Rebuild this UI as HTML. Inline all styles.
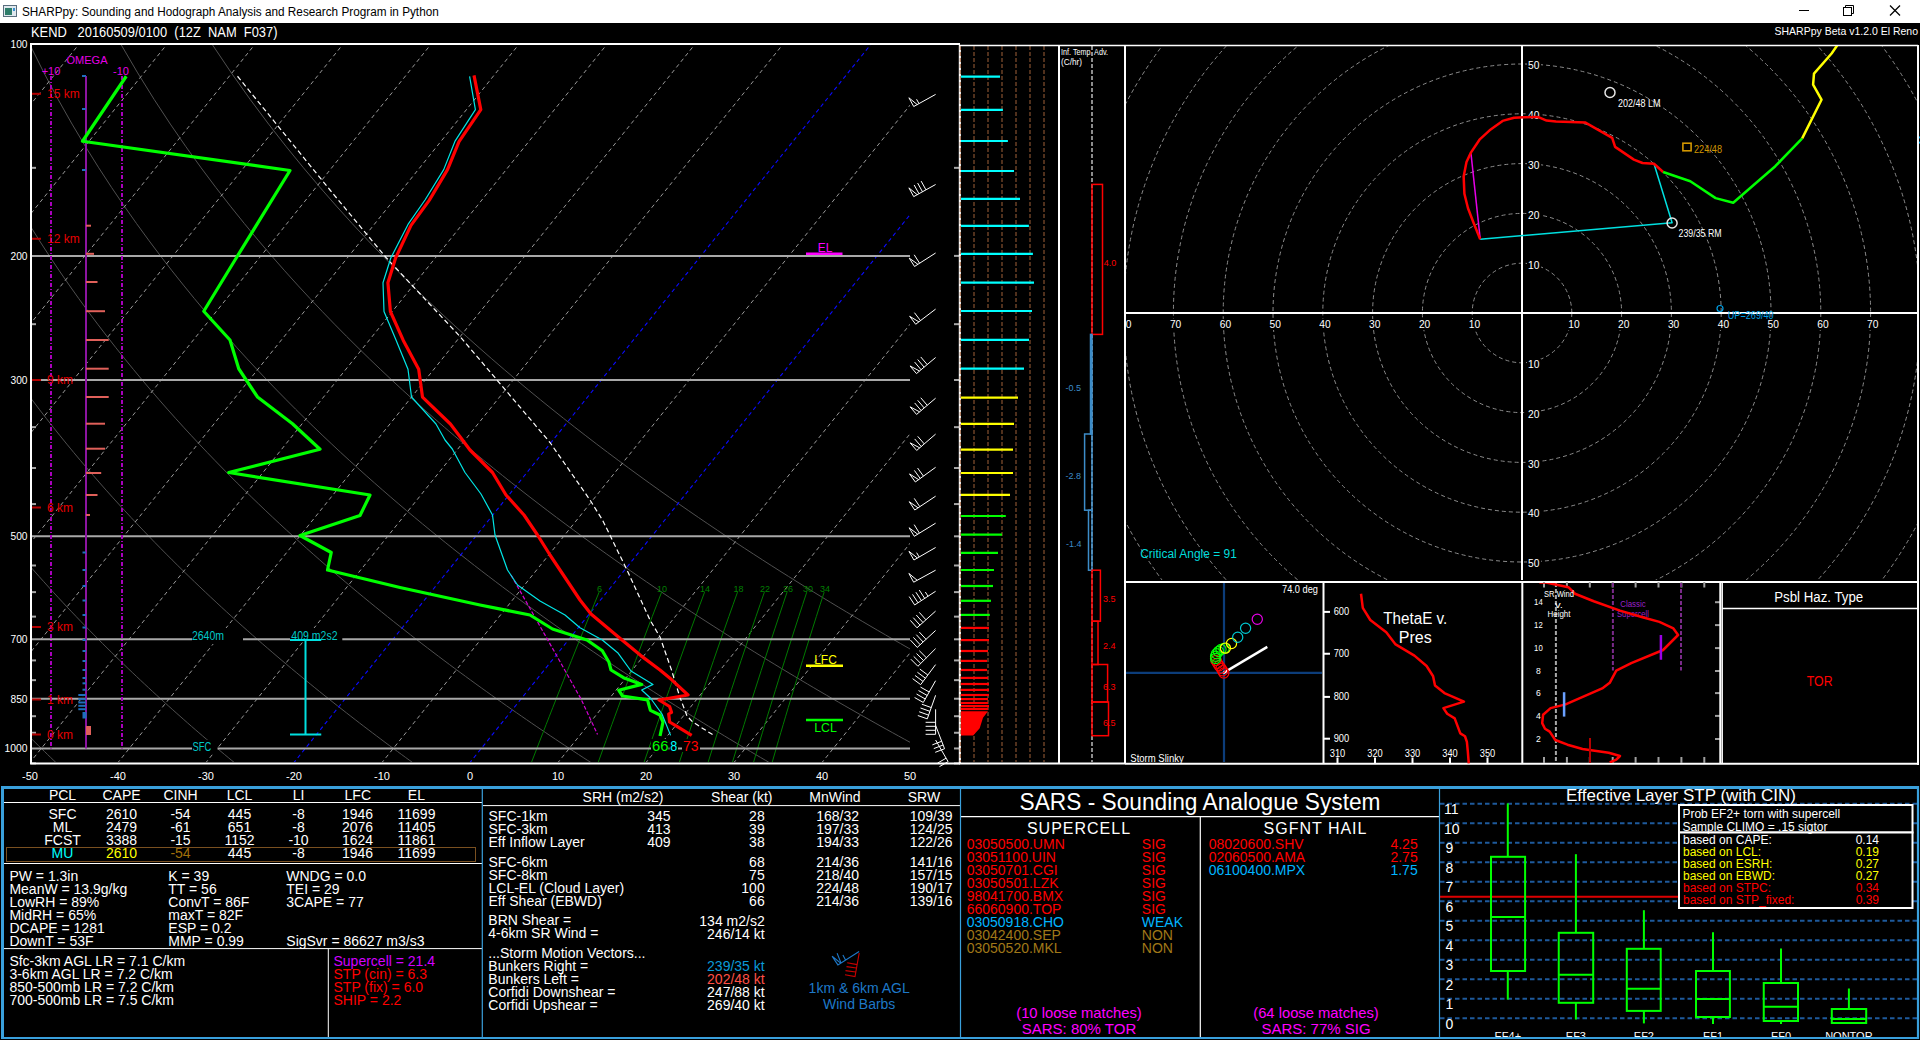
<!DOCTYPE html>
<html><head><meta charset="utf-8"><title>SHARPpy</title>
<style>
html,body{margin:0;padding:0;background:#000;width:1920px;height:1040px;overflow:hidden}
svg{display:block}
text{font-family:"Liberation Sans",sans-serif}
</style></head><body>
<svg width="1920" height="1040" viewBox="0 0 1920 1040">
<rect x="0" y="0" width="1920" height="1040" fill="#000" stroke="none" stroke-width="1"/>
<rect x="0" y="0" width="1920" height="23" fill="#fff" stroke="none" stroke-width="1"/>
<rect x="3.5" y="5.5" width="13" height="11" fill="#dfe8ee" stroke="#5a6e7e" stroke-width="1"/>
<rect x="5" y="8" width="7" height="7" fill="#2e7d6a" stroke="none" stroke-width="1"/>
<rect x="13" y="8" width="2" height="3" fill="#3a8fd0" stroke="none" stroke-width="1"/>
<text x="22" y="15.64" font-size="12" fill="#000" textLength="416.75" lengthAdjust="spacingAndGlyphs" xml:space="preserve">SHARPpy: Sounding and Hodograph Analysis and Research Program in Python</text>
<line x1="1799" y1="10.5" x2="1809" y2="10.5" stroke="#000" stroke-width="1"/>
<rect x="1843.5" y="7.5" width="8" height="8" fill="none" stroke="#000" stroke-width="1"/>
<path d="M1845.5,7.5 V5.5 H1853.5 V13.5 H1851.5" fill="none" stroke="#000" stroke-width="1"/>
<line x1="1890" y1="5.5" x2="1900" y2="15.5" stroke="#000" stroke-width="1.2"/>
<line x1="1900" y1="5.5" x2="1890" y2="15.5" stroke="#000" stroke-width="1.2"/>
<text x="31" y="37.33" font-size="14" fill="#fff" textLength="246.5" lengthAdjust="spacingAndGlyphs" xml:space="preserve">KEND   20160509/0100  (12Z  NAM  F037)</text>
<text x="1918" y="35" font-size="11" fill="#fff" text-anchor="end" textLength="143.5" lengthAdjust="spacingAndGlyphs" xml:space="preserve">SHARPpy Beta v1.2.0 El Reno</text>
<defs><clipPath id="skc"><rect x="31" y="45" width="879" height="717"/></clipPath><clipPath id="hodc"><rect x="1126" y="46" width="791" height="534"/></clipPath></defs>
<g clip-path="url(#skc)">
<polyline points="56.85,763.39 53.78,760.46 50.7,757.5 47.6,754.52 44.49,751.5 41.36,748.46 38.22,745.38 35.06,742.27 31.89,739.13 28.7,735.96 25.49,732.76 22.27,729.52 19.03,726.25 15.77,722.94 12.5,719.59 9.21,716.21 5.91,712.79 2.58,709.33 -0.76,705.84 -4.12,702.3 -7.5,698.72 -10.9,695.1 -14.32,691.43 -17.75,687.72 -21.21,683.96 -24.68,680.16 -28.18,676.31 -31.7,672.41 -35.23,668.47 -38.79,664.46 -42.37,660.41 -45.97,656.3 -49.59,652.14 -53.24,647.92 -56.9,643.64 -60.59,639.3 -64.31,634.89 -68.04,630.42 -71.8,625.89 -75.59,621.29 -79.4,616.62 -83.24,611.87 -87.1,607.05 -90.99,602.15 -94.9,597.18 -98.84,592.12 -102.81,586.97 -106.81,581.74 -110.83,576.42 -114.89,571 -118.97,565.49 -123.08,559.87 -127.23,554.15 -131.4,548.32 -135.61,542.38 -139.84,536.32 -144.11,530.14 -148.42,523.82 -152.75,517.38 -157.12,510.8 -161.53,504.07 -165.97,497.2 -170.45,490.16 -174.96,482.96 -179.51,475.58 -184.1,468.03 -188.72,460.28 -193.39,452.33 -198.09,444.17 -202.83,435.78 -207.62,427.16 -212.44,418.29 -217.3,409.15 -222.21,399.73 -227.15,390.02 -232.14,379.98 -237.16,369.6 -242.23,358.87 -247.34,347.73 -252.48,336.18 -257.66,324.18 -262.88,311.69 -268.13,298.66 -273.41,285.06 -278.72,270.82 -284.04,255.89 -289.38,240.19 -294.73,223.64 -300.07,206.15 -305.38,187.59 -310.66,167.84 -315.87,146.73 -320.98,124.05 -325.96,99.55 -330.72,72.92 -335.21,43.75" fill="none" stroke="#505050" stroke-width="1" stroke-linejoin="round"/>
<polyline points="235.32,763.39 231.76,760.46 228.19,757.5 224.6,754.52 220.99,751.5 217.36,748.46 213.71,745.38 210.05,742.27 206.36,739.13 202.66,735.96 198.93,732.76 195.18,729.52 191.42,726.25 187.63,722.94 183.82,719.59 179.99,716.21 176.14,712.79 172.27,709.33 168.37,705.84 164.45,702.3 160.51,698.72 156.55,695.1 152.56,691.43 148.55,687.72 144.51,683.96 140.45,680.16 136.36,676.31 132.24,672.41 128.1,668.47 123.94,664.46 119.74,660.41 115.52,656.3 111.28,652.14 107,647.92 102.69,643.64 98.36,639.3 93.99,634.89 89.59,630.42 85.17,625.89 80.71,621.29 76.22,616.62 71.69,611.87 67.14,607.05 62.55,602.15 57.92,597.18 53.26,592.12 48.56,586.97 43.83,581.74 39.06,576.42 34.25,571 29.4,565.49 24.51,559.87 19.58,554.15 14.61,548.32 9.59,542.38 4.54,536.32 -0.56,530.14 -5.71,523.82 -10.9,517.38 -16.14,510.8 -21.43,504.07 -26.77,497.2 -32.16,490.16 -37.6,482.96 -43.09,475.58 -48.63,468.03 -54.24,460.28 -59.9,452.33 -65.61,444.17 -71.39,435.78 -77.22,427.16 -83.12,418.29 -89.08,409.15 -95.11,399.73 -101.2,390.02 -107.36,379.98 -113.59,369.6 -119.89,358.87 -126.26,347.73 -132.71,336.18 -139.22,324.18 -145.81,311.69 -152.48,298.66 -159.22,285.06 -166.03,270.82 -172.92,255.89 -179.87,240.19 -186.9,223.64 -193.98,206.15 -201.12,187.59 -208.3,167.84 -215.51,146.73 -222.73,124.05 -229.92,99.55 -237.05,72.92 -244.04,43.75" fill="none" stroke="#505050" stroke-width="1" stroke-linejoin="round"/>
<polyline points="413.79,763.39 409.74,760.46 405.68,757.5 401.6,754.52 397.49,751.5 393.36,748.46 389.21,745.38 385.03,742.27 380.84,739.13 376.61,735.96 372.37,732.76 368.1,729.52 363.81,726.25 359.49,722.94 355.14,719.59 350.77,716.21 346.38,712.79 341.96,709.33 337.51,705.84 333.03,702.3 328.53,698.72 324,695.1 319.43,691.43 314.84,687.72 310.22,683.96 305.58,680.16 300.9,676.31 296.18,672.41 291.44,668.47 286.67,664.46 281.86,660.41 277.02,656.3 272.14,652.14 267.23,647.92 262.29,643.64 257.3,639.3 252.29,634.89 247.23,630.42 242.14,625.89 237.01,621.29 231.84,616.62 226.62,611.87 221.37,607.05 216.08,602.15 210.74,597.18 205.36,592.12 199.93,586.97 194.46,581.74 188.94,576.42 183.38,571 177.76,565.49 172.1,559.87 166.38,554.15 160.61,548.32 154.79,542.38 148.92,536.32 142.99,530.14 137,523.82 130.95,517.38 124.84,510.8 118.67,504.07 112.43,497.2 106.14,490.16 99.77,482.96 93.33,475.58 86.83,468.03 80.25,460.28 73.6,452.33 66.87,444.17 60.06,435.78 53.17,427.16 46.2,418.29 39.13,409.15 31.99,399.73 24.75,390.02 17.41,379.98 9.98,369.6 2.45,358.87 -5.19,347.73 -12.93,336.18 -20.78,324.18 -28.75,311.69 -36.83,298.66 -45.02,285.06 -53.35,270.82 -61.79,255.89 -70.36,240.19 -79.07,223.64 -87.9,206.15 -96.86,187.59 -105.94,167.84 -115.15,146.73 -124.47,124.05 -133.88,99.55 -143.37,72.92 -152.88,43.75" fill="none" stroke="#505050" stroke-width="1" stroke-linejoin="round"/>
<polyline points="592.26,763.39 587.73,760.46 583.17,757.5 578.59,754.52 573.99,751.5 569.36,748.46 564.7,745.38 560.02,742.27 555.31,739.13 550.57,735.96 545.81,732.76 541.02,729.52 536.19,726.25 531.34,722.94 526.46,719.59 521.56,716.21 516.62,712.79 511.64,709.33 506.64,705.84 501.61,702.3 496.54,698.72 491.44,695.1 486.31,691.43 481.14,687.72 475.94,683.96 470.71,680.16 465.43,676.31 460.12,672.41 454.78,668.47 449.39,664.46 443.97,660.41 438.51,656.3 433.01,652.14 427.46,647.92 421.88,643.64 416.25,639.3 410.58,634.89 404.87,630.42 399.11,625.89 393.31,621.29 387.46,616.62 381.56,611.87 375.61,607.05 369.61,602.15 363.56,597.18 357.46,592.12 351.3,586.97 345.1,581.74 338.83,576.42 332.51,571 326.13,565.49 319.69,559.87 313.19,554.15 306.62,548.32 299.99,542.38 293.3,536.32 286.54,530.14 279.7,523.82 272.8,517.38 265.82,510.8 258.77,504.07 251.64,497.2 244.43,490.16 237.13,482.96 229.76,475.58 222.29,468.03 214.74,460.28 207.09,452.33 199.35,444.17 191.51,435.78 183.56,427.16 175.51,418.29 167.35,409.15 159.08,399.73 150.69,390.02 142.19,379.98 133.55,369.6 124.79,358.87 115.89,347.73 106.85,336.18 97.66,324.18 88.32,311.69 78.83,298.66 69.17,285.06 59.34,270.82 49.33,255.89 39.15,240.19 28.77,223.64 18.19,206.15 7.41,187.59 -3.58,167.84 -14.79,146.73 -26.21,124.05 -37.85,99.55 -49.69,72.92 -61.72,43.75" fill="none" stroke="#505050" stroke-width="1" stroke-linejoin="round"/>
<polyline points="770.73,763.39 765.71,760.46 760.67,757.5 755.59,754.52 750.49,751.5 745.36,748.46 740.2,745.38 735.01,742.27 729.79,739.13 724.53,735.96 719.25,732.76 713.93,729.52 708.58,726.25 703.2,722.94 697.79,719.59 692.34,716.21 686.85,712.79 681.33,709.33 675.78,705.84 670.19,702.3 664.56,698.72 658.89,695.1 653.19,691.43 647.44,687.72 641.66,683.96 635.84,680.16 629.97,676.31 624.06,672.41 618.11,668.47 612.12,664.46 606.08,660.41 600,656.3 593.87,652.14 587.7,647.92 581.47,643.64 575.2,639.3 568.88,634.89 562.51,630.42 556.08,625.89 549.61,621.29 543.07,616.62 536.49,611.87 529.84,607.05 523.14,602.15 516.38,597.18 509.56,592.12 502.68,586.97 495.73,581.74 488.72,576.42 481.64,571 474.49,565.49 467.28,559.87 459.99,554.15 452.63,548.32 445.19,542.38 437.68,536.32 430.08,530.14 422.41,523.82 414.65,517.38 406.8,510.8 398.87,504.07 390.84,497.2 382.72,490.16 374.5,482.96 366.18,475.58 357.75,468.03 349.22,460.28 340.58,452.33 331.83,444.17 322.95,435.78 313.95,427.16 304.83,418.29 295.57,409.15 286.18,399.73 276.64,390.02 266.96,379.98 257.12,369.6 247.13,358.87 236.96,347.73 226.62,336.18 216.1,324.18 205.39,311.69 194.48,298.66 183.36,285.06 172.03,270.82 160.46,255.89 148.66,240.19 136.6,223.64 124.27,206.15 111.67,187.59 98.77,167.84 85.57,146.73 72.05,124.05 58.19,99.55 43.99,72.92 29.44,43.75" fill="none" stroke="#505050" stroke-width="1" stroke-linejoin="round"/>
<polyline points="949.2,763.39 943.69,760.46 938.16,757.5 932.59,754.52 926.99,751.5 921.36,748.46 915.69,745.38 909.99,742.27 904.26,739.13 898.49,735.96 892.69,732.76 886.85,729.52 880.97,726.25 875.06,722.94 869.11,719.59 863.12,716.21 857.09,712.79 851.02,709.33 844.91,705.84 838.76,702.3 832.57,698.72 826.34,695.1 820.06,691.43 813.74,687.72 807.38,683.96 800.96,680.16 794.51,676.31 788,672.41 781.45,668.47 774.85,664.46 768.2,660.41 761.49,656.3 754.74,652.14 747.93,647.92 741.07,643.64 734.15,639.3 727.18,634.89 720.15,630.42 713.06,625.89 705.9,621.29 698.69,616.62 691.42,611.87 684.08,607.05 676.67,602.15 669.2,597.18 661.66,592.12 654.05,586.97 646.36,581.74 638.61,576.42 630.77,571 622.86,565.49 614.87,559.87 606.79,554.15 598.64,548.32 590.39,542.38 582.06,536.32 573.63,530.14 565.12,523.82 556.5,517.38 547.78,510.8 538.97,504.07 530.04,497.2 521.01,490.16 511.86,482.96 502.6,475.58 493.22,468.03 483.71,460.28 474.07,452.33 464.31,444.17 454.4,435.78 444.35,427.16 434.15,418.29 423.79,409.15 413.28,399.73 402.59,390.02 391.73,379.98 380.69,369.6 369.46,358.87 358.04,347.73 346.4,336.18 334.54,324.18 322.46,311.69 310.13,298.66 297.56,285.06 284.71,270.82 271.59,255.89 258.16,240.19 244.43,223.64 230.36,206.15 215.93,187.59 201.13,167.84 185.93,146.73 170.3,124.05 154.23,99.55 137.67,72.92 120.6,43.75" fill="none" stroke="#505050" stroke-width="1" stroke-linejoin="round"/>
<polyline points="1127.67,763.39 1121.68,760.46 1115.65,757.5 1109.59,754.52 1103.49,751.5 1097.36,748.46 1091.19,745.38 1084.98,742.27 1078.74,739.13 1072.45,735.96 1066.13,732.76 1059.76,729.52 1053.36,726.25 1046.92,722.94 1040.43,719.59 1033.9,716.21 1027.33,712.79 1020.71,709.33 1014.05,705.84 1007.34,702.3 1000.59,698.72 993.79,695.1 986.94,691.43 980.04,687.72 973.09,683.96 966.09,680.16 959.04,676.31 951.94,672.41 944.79,668.47 937.58,664.46 930.31,660.41 922.99,656.3 915.6,652.14 908.16,647.92 900.66,643.64 893.1,639.3 885.47,634.89 877.78,630.42 870.03,625.89 862.2,621.29 854.31,616.62 846.35,611.87 838.31,607.05 830.21,602.15 822.02,597.18 813.76,592.12 805.42,586.97 797,581.74 788.49,576.42 779.9,571 771.23,565.49 762.46,559.87 753.6,554.15 744.64,548.32 735.59,542.38 726.44,536.32 717.18,530.14 707.82,523.82 698.35,517.38 688.77,510.8 679.07,504.07 669.24,497.2 659.3,490.16 649.23,482.96 639.02,475.58 628.68,468.03 618.2,460.28 607.57,452.33 596.78,444.17 585.84,435.78 574.74,427.16 563.46,418.29 552.01,409.15 540.37,399.73 528.54,390.02 516.51,379.98 504.27,369.6 491.8,358.87 479.11,347.73 466.17,336.18 452.98,324.18 439.53,311.69 425.79,298.66 411.75,285.06 397.4,270.82 382.71,255.89 367.67,240.19 352.26,223.64 336.44,206.15 320.19,187.59 303.49,167.84 286.29,146.73 268.56,124.05 250.26,99.55 231.35,72.92 211.76,43.75" fill="none" stroke="#505050" stroke-width="1" stroke-linejoin="round"/>
<line x1="-938.8" y1="763.5" x2="-360.83" y2="44" stroke="#9a9a9a" stroke-width="1" stroke-dasharray="4,3.2"/>
<line x1="-850.8" y1="763.5" x2="-272.83" y2="44" stroke="#9a9a9a" stroke-width="1" stroke-dasharray="4,3.2"/>
<line x1="-762.8" y1="763.5" x2="-184.83" y2="44" stroke="#9a9a9a" stroke-width="1" stroke-dasharray="4,3.2"/>
<line x1="-674.8" y1="763.5" x2="-96.83" y2="44" stroke="#9a9a9a" stroke-width="1" stroke-dasharray="4,3.2"/>
<line x1="-586.8" y1="763.5" x2="-8.83" y2="44" stroke="#9a9a9a" stroke-width="1" stroke-dasharray="4,3.2"/>
<line x1="-498.8" y1="763.5" x2="79.17" y2="44" stroke="#9a9a9a" stroke-width="1" stroke-dasharray="4,3.2"/>
<line x1="-410.8" y1="763.5" x2="167.17" y2="44" stroke="#9a9a9a" stroke-width="1" stroke-dasharray="4,3.2"/>
<line x1="-322.8" y1="763.5" x2="255.17" y2="44" stroke="#9a9a9a" stroke-width="1" stroke-dasharray="4,3.2"/>
<line x1="-234.8" y1="763.5" x2="343.17" y2="44" stroke="#9a9a9a" stroke-width="1" stroke-dasharray="4,3.2"/>
<line x1="-146.8" y1="763.5" x2="431.17" y2="44" stroke="#9a9a9a" stroke-width="1" stroke-dasharray="4,3.2"/>
<line x1="-58.8" y1="763.5" x2="519.17" y2="44" stroke="#9a9a9a" stroke-width="1" stroke-dasharray="4,3.2"/>
<line x1="29.2" y1="763.5" x2="607.17" y2="44" stroke="#9a9a9a" stroke-width="1" stroke-dasharray="4,3.2"/>
<line x1="117.2" y1="763.5" x2="695.17" y2="44" stroke="#9a9a9a" stroke-width="1" stroke-dasharray="4,3.2"/>
<line x1="205.2" y1="763.5" x2="783.17" y2="44" stroke="#9a9a9a" stroke-width="1" stroke-dasharray="4,3.2"/>
<line x1="293.2" y1="763.5" x2="871.17" y2="44" stroke="#0a0aff" stroke-width="1.1" stroke-dasharray="4,3.2"/>
<line x1="381.2" y1="763.5" x2="959.17" y2="44" stroke="#9a9a9a" stroke-width="1" stroke-dasharray="4,3.2"/>
<line x1="469.2" y1="763.5" x2="1047.17" y2="44" stroke="#0a0aff" stroke-width="1.1" stroke-dasharray="4,3.2"/>
<line x1="557.2" y1="763.5" x2="1135.17" y2="44" stroke="#9a9a9a" stroke-width="1" stroke-dasharray="4,3.2"/>
<line x1="645.2" y1="763.5" x2="1223.17" y2="44" stroke="#9a9a9a" stroke-width="1" stroke-dasharray="4,3.2"/>
<line x1="733.2" y1="763.5" x2="1311.17" y2="44" stroke="#9a9a9a" stroke-width="1" stroke-dasharray="4,3.2"/>
<line x1="821.2" y1="763.5" x2="1399.17" y2="44" stroke="#9a9a9a" stroke-width="1" stroke-dasharray="4,3.2"/>
<line x1="909.2" y1="763.5" x2="1487.17" y2="44" stroke="#9a9a9a" stroke-width="1" stroke-dasharray="4,3.2"/>
</g>
<g clip-path="url(#skc)">
<polyline points="599.12,592.12 594.01,604.61 589.12,616.62 584.44,628.17 579.95,639.3 575.63,650.04 571.47,660.41 567.46,670.45 563.6,680.16 559.87,689.58 556.26,698.72 552.78,707.59 549.4,716.21 546.12,724.6 542.94,732.76 539.86,740.71 536.86,748.46 533.94,756.01 531.11,763.39" fill="none" stroke="#007a00" stroke-width="1" stroke-linejoin="round"/>
<polyline points="661.64,592.12 656.82,604.61 652.21,616.62 647.8,628.17 643.58,639.3 639.52,650.04 635.61,660.41 631.85,670.45 628.22,680.16 624.73,689.58 621.35,698.72 618.08,707.59 614.91,716.21 611.85,724.6 608.88,732.76 605.99,740.71 603.19,748.46 600.47,756.01 597.83,763.39" fill="none" stroke="#007a00" stroke-width="1" stroke-linejoin="round"/>
<polyline points="704.57,592.12 699.96,604.61 695.55,616.62 691.34,628.17 687.3,639.3 683.42,650.04 679.69,660.41 676.1,670.45 672.64,680.16 669.31,689.58 666.09,698.72 662.97,707.59 659.96,716.21 657.05,724.6 654.22,732.76 651.48,740.71 648.82,748.46 646.23,756.01 643.72,763.39" fill="none" stroke="#007a00" stroke-width="1" stroke-linejoin="round"/>
<polyline points="737.53,592.12 733.09,604.61 728.84,616.62 724.77,628.17 720.88,639.3 717.14,650.04 713.55,660.41 710.1,670.45 706.77,680.16 703.56,689.58 700.47,698.72 697.47,707.59 694.58,716.21 691.78,724.6 689.07,732.76 686.44,740.71 683.89,748.46 681.41,756.01 679,763.39" fill="none" stroke="#007a00" stroke-width="1" stroke-linejoin="round"/>
<polyline points="764.39,592.12 760.07,604.61 755.95,616.62 752.01,628.17 748.24,639.3 744.62,650.04 741.14,660.41 737.8,670.45 734.58,680.16 731.48,689.58 728.49,698.72 725.6,707.59 722.8,716.21 720.1,724.6 717.48,732.76 714.94,740.71 712.48,748.46 710.09,756.01 707.77,763.39" fill="none" stroke="#007a00" stroke-width="1" stroke-linejoin="round"/>
<polyline points="787.09,592.12 782.89,604.61 778.88,616.62 775.05,628.17 771.38,639.3 767.86,650.04 764.48,660.41 761.23,670.45 758.11,680.16 755.09,689.58 752.19,698.72 749.38,707.59 746.67,716.21 744.05,724.6 741.51,732.76 739.05,740.71 736.67,748.46 734.35,756.01 732.11,763.39" fill="none" stroke="#007a00" stroke-width="1" stroke-linejoin="round"/>
<polyline points="806.78,592.12 802.67,604.61 798.76,616.62 795.02,628.17 791.44,639.3 788.01,650.04 784.72,660.41 781.55,670.45 778.51,680.16 775.57,689.58 772.75,698.72 770.02,707.59 767.38,716.21 764.83,724.6 762.36,732.76 759.97,740.71 757.65,748.46 755.4,756.01 753.22,763.39" fill="none" stroke="#007a00" stroke-width="1" stroke-linejoin="round"/>
<polyline points="824.16,592.12 820.15,604.61 816.32,616.62 812.66,628.17 809.16,639.3 805.81,650.04 802.59,660.41 799.5,670.45 796.53,680.16 793.67,689.58 790.91,698.72 788.24,707.59 785.67,716.21 783.19,724.6 780.78,732.76 778.45,740.71 776.19,748.46 774,756.01 771.88,763.39" fill="none" stroke="#007a00" stroke-width="1" stroke-linejoin="round"/>
</g>
<text x="599.5" y="591.61" font-size="9" fill="#008000" text-anchor="middle" xml:space="preserve">6</text>
<text x="662" y="591.61" font-size="9" fill="#008000" text-anchor="middle" xml:space="preserve">10</text>
<text x="705" y="591.61" font-size="9" fill="#008000" text-anchor="middle" xml:space="preserve">14</text>
<text x="738.5" y="591.61" font-size="9" fill="#008000" text-anchor="middle" xml:space="preserve">18</text>
<text x="765" y="591.61" font-size="9" fill="#008000" text-anchor="middle" xml:space="preserve">22</text>
<text x="788" y="591.61" font-size="9" fill="#008000" text-anchor="middle" xml:space="preserve">26</text>
<text x="808" y="591.61" font-size="9" fill="#008000" text-anchor="middle" xml:space="preserve">30</text>
<text x="825" y="591.61" font-size="9" fill="#008000" text-anchor="middle" xml:space="preserve">34</text>
<line x1="31" y1="255.89" x2="910" y2="255.89" stroke="#a8a8a8" stroke-width="2"/>
<line x1="31" y1="379.98" x2="910" y2="379.98" stroke="#a8a8a8" stroke-width="2"/>
<line x1="31" y1="536.32" x2="910" y2="536.32" stroke="#a8a8a8" stroke-width="2"/>
<line x1="31" y1="639.3" x2="910" y2="639.3" stroke="#a8a8a8" stroke-width="2"/>
<line x1="31" y1="698.72" x2="910" y2="698.72" stroke="#a8a8a8" stroke-width="2"/>
<line x1="31" y1="748.46" x2="910" y2="748.46" stroke="#a8a8a8" stroke-width="2"/>
<line x1="31" y1="167.84" x2="36" y2="167.84" stroke="#a8a8a8" stroke-width="2"/>
<line x1="954" y1="167.84" x2="959" y2="167.84" stroke="#a8a8a8" stroke-width="2"/>
<line x1="31" y1="324.18" x2="36" y2="324.18" stroke="#a8a8a8" stroke-width="2"/>
<line x1="954" y1="324.18" x2="959" y2="324.18" stroke="#a8a8a8" stroke-width="2"/>
<line x1="31" y1="427.16" x2="36" y2="427.16" stroke="#a8a8a8" stroke-width="2"/>
<line x1="954" y1="427.16" x2="959" y2="427.16" stroke="#a8a8a8" stroke-width="2"/>
<line x1="31" y1="468.03" x2="36" y2="468.03" stroke="#a8a8a8" stroke-width="2"/>
<line x1="954" y1="468.03" x2="959" y2="468.03" stroke="#a8a8a8" stroke-width="2"/>
<line x1="31" y1="504.07" x2="36" y2="504.07" stroke="#a8a8a8" stroke-width="2"/>
<line x1="954" y1="504.07" x2="959" y2="504.07" stroke="#a8a8a8" stroke-width="2"/>
<line x1="31" y1="565.49" x2="36" y2="565.49" stroke="#a8a8a8" stroke-width="2"/>
<line x1="954" y1="565.49" x2="959" y2="565.49" stroke="#a8a8a8" stroke-width="2"/>
<line x1="31" y1="592.12" x2="36" y2="592.12" stroke="#a8a8a8" stroke-width="2"/>
<line x1="954" y1="592.12" x2="959" y2="592.12" stroke="#a8a8a8" stroke-width="2"/>
<line x1="31" y1="616.62" x2="36" y2="616.62" stroke="#a8a8a8" stroke-width="2"/>
<line x1="954" y1="616.62" x2="959" y2="616.62" stroke="#a8a8a8" stroke-width="2"/>
<line x1="31" y1="660.41" x2="36" y2="660.41" stroke="#a8a8a8" stroke-width="2"/>
<line x1="954" y1="660.41" x2="959" y2="660.41" stroke="#a8a8a8" stroke-width="2"/>
<line x1="31" y1="680.16" x2="36" y2="680.16" stroke="#a8a8a8" stroke-width="2"/>
<line x1="954" y1="680.16" x2="959" y2="680.16" stroke="#a8a8a8" stroke-width="2"/>
<line x1="31" y1="716.21" x2="36" y2="716.21" stroke="#a8a8a8" stroke-width="2"/>
<line x1="954" y1="716.21" x2="959" y2="716.21" stroke="#a8a8a8" stroke-width="2"/>
<line x1="31" y1="732.76" x2="36" y2="732.76" stroke="#a8a8a8" stroke-width="2"/>
<line x1="954" y1="732.76" x2="959" y2="732.76" stroke="#a8a8a8" stroke-width="2"/>
<line x1="31" y1="763.39" x2="36" y2="763.39" stroke="#a8a8a8" stroke-width="2"/>
<line x1="954" y1="763.39" x2="959" y2="763.39" stroke="#a8a8a8" stroke-width="2"/>
<line x1="954" y1="255.89" x2="959" y2="255.89" stroke="#a8a8a8" stroke-width="2"/>
<line x1="954" y1="379.98" x2="959" y2="379.98" stroke="#a8a8a8" stroke-width="2"/>
<line x1="954" y1="536.32" x2="959" y2="536.32" stroke="#a8a8a8" stroke-width="2"/>
<line x1="954" y1="639.3" x2="959" y2="639.3" stroke="#a8a8a8" stroke-width="2"/>
<line x1="954" y1="698.72" x2="959" y2="698.72" stroke="#a8a8a8" stroke-width="2"/>
<line x1="954" y1="748.46" x2="959" y2="748.46" stroke="#a8a8a8" stroke-width="2"/>
<text x="27.5" y="47.55" font-size="11" fill="#fff" text-anchor="end" textLength="17" lengthAdjust="spacingAndGlyphs" xml:space="preserve">100</text>
<text x="27.5" y="259.68" font-size="11" fill="#fff" text-anchor="end" textLength="17" lengthAdjust="spacingAndGlyphs" xml:space="preserve">200</text>
<text x="27.5" y="383.78" font-size="11" fill="#fff" text-anchor="end" textLength="17" lengthAdjust="spacingAndGlyphs" xml:space="preserve">300</text>
<text x="27.5" y="540.11" font-size="11" fill="#fff" text-anchor="end" textLength="17" lengthAdjust="spacingAndGlyphs" xml:space="preserve">500</text>
<text x="27.5" y="643.09" font-size="11" fill="#fff" text-anchor="end" textLength="17" lengthAdjust="spacingAndGlyphs" xml:space="preserve">700</text>
<text x="27.5" y="702.51" font-size="11" fill="#fff" text-anchor="end" textLength="17" lengthAdjust="spacingAndGlyphs" xml:space="preserve">850</text>
<text x="27.5" y="752.25" font-size="11" fill="#fff" text-anchor="end" textLength="23" lengthAdjust="spacingAndGlyphs" xml:space="preserve">1000</text>
<text x="30" y="779.79" font-size="11" fill="#fff" text-anchor="middle" xml:space="preserve">-50</text>
<text x="118" y="779.79" font-size="11" fill="#fff" text-anchor="middle" xml:space="preserve">-40</text>
<text x="206" y="779.79" font-size="11" fill="#fff" text-anchor="middle" xml:space="preserve">-30</text>
<text x="294" y="779.79" font-size="11" fill="#fff" text-anchor="middle" xml:space="preserve">-20</text>
<text x="382" y="779.79" font-size="11" fill="#fff" text-anchor="middle" xml:space="preserve">-10</text>
<text x="470" y="779.79" font-size="11" fill="#fff" text-anchor="middle" xml:space="preserve">0</text>
<text x="558" y="779.79" font-size="11" fill="#fff" text-anchor="middle" xml:space="preserve">10</text>
<text x="646" y="779.79" font-size="11" fill="#fff" text-anchor="middle" xml:space="preserve">20</text>
<text x="734" y="779.79" font-size="11" fill="#fff" text-anchor="middle" xml:space="preserve">30</text>
<text x="822" y="779.79" font-size="11" fill="#fff" text-anchor="middle" xml:space="preserve">40</text>
<text x="910" y="779.79" font-size="11" fill="#fff" text-anchor="middle" xml:space="preserve">50</text>
<line x1="51" y1="76" x2="51" y2="748.5" stroke="#a800bc" stroke-width="2" stroke-dasharray="4,2,1,2"/>
<line x1="122" y1="76" x2="122" y2="748.5" stroke="#a800bc" stroke-width="2" stroke-dasharray="4,2,1,2"/>
<line x1="86" y1="76" x2="86" y2="748.5" stroke="#8c14a0" stroke-width="2"/>
<text x="87" y="63.8" font-size="11" fill="#e600e6" text-anchor="middle" xml:space="preserve">OMEGA</text>
<text x="51" y="75.3" font-size="11" fill="#e600e6" text-anchor="middle" xml:space="preserve">+10</text>
<text x="121" y="75.3" font-size="11" fill="#e600e6" text-anchor="middle" xml:space="preserve">-10</text>
<line x1="82" y1="76" x2="86" y2="76" stroke="#1e6ebe" stroke-width="2"/>
<line x1="82" y1="109" x2="86" y2="109" stroke="#1e6ebe" stroke-width="2"/>
<line x1="82" y1="141" x2="86" y2="141" stroke="#1e6ebe" stroke-width="2"/>
<line x1="82" y1="170" x2="86" y2="170" stroke="#1e6ebe" stroke-width="2"/>
<line x1="86" y1="225.7" x2="91" y2="225.7" stroke="#e0605a" stroke-width="2"/>
<line x1="86" y1="253.8" x2="94" y2="253.8" stroke="#e0605a" stroke-width="2"/>
<line x1="86" y1="282" x2="97.5" y2="282" stroke="#e0605a" stroke-width="2"/>
<line x1="86" y1="311.2" x2="105" y2="311.2" stroke="#e0605a" stroke-width="2"/>
<line x1="86" y1="340" x2="108.7" y2="340" stroke="#e0605a" stroke-width="2"/>
<line x1="86" y1="368.7" x2="108.7" y2="368.7" stroke="#e0605a" stroke-width="2"/>
<line x1="86" y1="397" x2="108.7" y2="397" stroke="#e0605a" stroke-width="2"/>
<line x1="86" y1="423.7" x2="105" y2="423.7" stroke="#e0605a" stroke-width="2"/>
<line x1="86" y1="448.7" x2="105" y2="448.7" stroke="#e0605a" stroke-width="2"/>
<line x1="86" y1="473" x2="101.2" y2="473" stroke="#e0605a" stroke-width="2"/>
<line x1="86" y1="495" x2="97.5" y2="495" stroke="#e0605a" stroke-width="2"/>
<line x1="86" y1="515" x2="90" y2="515" stroke="#e0605a" stroke-width="2"/>
<line x1="82.5" y1="552.5" x2="86" y2="552.5" stroke="#1e6ebe" stroke-width="2"/>
<line x1="82.5" y1="570" x2="86" y2="570" stroke="#1e6ebe" stroke-width="2"/>
<line x1="82.5" y1="586" x2="86" y2="586" stroke="#1e6ebe" stroke-width="2"/>
<line x1="82.5" y1="600.5" x2="86" y2="600.5" stroke="#1e6ebe" stroke-width="2"/>
<line x1="82.5" y1="615" x2="86" y2="615" stroke="#1e6ebe" stroke-width="2"/>
<line x1="82.5" y1="627.5" x2="86" y2="627.5" stroke="#1e6ebe" stroke-width="2"/>
<line x1="82.5" y1="640" x2="86" y2="640" stroke="#1e6ebe" stroke-width="2"/>
<line x1="82.5" y1="651" x2="86" y2="651" stroke="#1e6ebe" stroke-width="2"/>
<line x1="82.5" y1="661" x2="86" y2="661" stroke="#1e6ebe" stroke-width="2"/>
<line x1="82.5" y1="670" x2="86" y2="670" stroke="#1e6ebe" stroke-width="2"/>
<line x1="82.5" y1="678" x2="86" y2="678" stroke="#1e6ebe" stroke-width="2"/>
<line x1="82.5" y1="683.3" x2="86" y2="683.3" stroke="#1e6ebe" stroke-width="2"/>
<line x1="82.5" y1="689.7" x2="86" y2="689.7" stroke="#1e6ebe" stroke-width="2"/>
<line x1="78.3" y1="695" x2="86" y2="695" stroke="#1e6ebe" stroke-width="2"/>
<line x1="78.3" y1="699.2" x2="86" y2="699.2" stroke="#1e6ebe" stroke-width="2"/>
<line x1="78.3" y1="702.5" x2="86" y2="702.5" stroke="#1e6ebe" stroke-width="2"/>
<line x1="78.3" y1="705.8" x2="86" y2="705.8" stroke="#1e6ebe" stroke-width="2"/>
<line x1="78.3" y1="709.2" x2="86" y2="709.2" stroke="#1e6ebe" stroke-width="2"/>
<rect x="82.5" y="712" width="4" height="6.5" fill="#1e6ebe" stroke="none" stroke-width="1"/>
<rect x="86" y="726" width="5" height="9" fill="#e0605a" stroke="none" stroke-width="1"/>
<line x1="31" y1="93.8" x2="41" y2="93.8" stroke="#b40000" stroke-width="2"/>
<text x="47" y="97.94" font-size="12" fill="#e60000" xml:space="preserve">15 km</text>
<line x1="31" y1="238.75" x2="41" y2="238.75" stroke="#b40000" stroke-width="2"/>
<text x="47" y="242.89" font-size="12" fill="#e60000" xml:space="preserve">12 km</text>
<line x1="31" y1="380" x2="41" y2="380" stroke="#b40000" stroke-width="2"/>
<text x="47" y="384.14" font-size="12" fill="#e60000" xml:space="preserve">9 km</text>
<line x1="31" y1="507.5" x2="41" y2="507.5" stroke="#b40000" stroke-width="2"/>
<text x="47" y="511.64" font-size="12" fill="#e60000" xml:space="preserve">6 km</text>
<line x1="31" y1="627" x2="41" y2="627" stroke="#b40000" stroke-width="2"/>
<text x="47" y="631.14" font-size="12" fill="#e60000" xml:space="preserve">3 km</text>
<line x1="31" y1="699.5" x2="41" y2="699.5" stroke="#b40000" stroke-width="2"/>
<text x="47" y="703.64" font-size="12" fill="#e60000" xml:space="preserve">1 km</text>
<line x1="31" y1="734.5" x2="41" y2="734.5" stroke="#b40000" stroke-width="2"/>
<text x="47" y="738.64" font-size="12" fill="#e60000" xml:space="preserve">0 km</text>
<g clip-path="url(#skc)">
<polyline points="511,575 555,652.7 581,699 597.5,734.4" fill="none" stroke="#d200d2" stroke-width="1.2" stroke-dasharray="4,2" stroke-linejoin="round"/>
<polyline points="237.5,76.25 330,190 386,257.5 460,336.5 480,360 550,442.5 590,500 602.5,520 627,570 650,620 660,637 671.5,670 680,697.5 687,716 692.7,722 713.8,735.4" fill="none" stroke="#ffffff" stroke-width="1.2" stroke-dasharray="5,3" stroke-linejoin="round"/>
<polyline points="126.25,76.25 82.5,141.25 290,170.5 235,260 203.75,311.25 230,340 238.75,368.75 257.5,397 292.5,423.75 320,449.25 228.75,472.5 370,495 360,515.5 300,535.5 331.25,552.5 327.5,570 400,587.5 480,605 530,615 552.5,629 587,640 602.3,650.8 609,662.3 611,670 623.5,677.7 641.7,684.4 618.7,690.2 622.5,696 647.5,699.8 650.4,710.4 660,715 663,722 660,736" fill="none" stroke="#00ff00" stroke-width="3.2" stroke-linejoin="round"/>
<polyline points="469.6,76.3 475.4,109.6 455.2,140.8 443.7,169.6 425,200 408,224.4 390.8,258 383,282.7 384,311.5 396,340 408,369.2 411.5,397 436,424 445,440 452.3,449 465,472.5 481,494 492.5,515 495,535 507.5,570 517.5,585 540,601 565,615 580,627.7 602.3,640 617.7,652.7 631,671 653,684.4 641.7,690 650.4,698 662,714 670.6,735.4" fill="none" stroke="#00e6e6" stroke-width="1.2" stroke-linejoin="round"/>
<polyline points="474,75.4 480.8,109.6 459,141.7 447.5,169.6 429.2,200.4 411,225.4 395.6,258 387.9,282.7 390.4,311.5 403.3,340.4 418.7,369.2 422.5,397.1 450.4,424 462.5,440 470,450 492.5,472.5 506,495 524,515 537.5,535 550,555 565,577.5 580,600 591,614 619.6,638 640.8,655.6 660,670 671.5,679.6 688,695 659,700 669.6,706.5 671.5,712.3 668.7,714 669.6,722 677.3,726.7 691.7,735.4" fill="none" stroke="#ff0000" stroke-width="3.2" stroke-linejoin="round"/>
</g>
<rect x="651" y="739" width="17.5" height="13" fill="#000" stroke="none" stroke-width="1"/>
<rect x="669.5" y="739" width="8.5" height="13" fill="#000" stroke="none" stroke-width="1"/>
<rect x="682" y="739" width="18" height="13" fill="#000" stroke="none" stroke-width="1"/>
<text x="652" y="750.8" font-size="15" fill="#00ff00" textLength="16.5" lengthAdjust="spacingAndGlyphs" xml:space="preserve">66</text>
<text x="670.3" y="750.8" font-size="15" fill="#00ffff" textLength="7" lengthAdjust="spacingAndGlyphs" xml:space="preserve">8</text>
<text x="683" y="750.8" font-size="15" fill="#ff0000" textLength="15.5" lengthAdjust="spacingAndGlyphs" xml:space="preserve">73</text>
<line x1="806" y1="665.8" x2="843" y2="665.8" stroke="#ffff00" stroke-width="2.5"/>
<text x="825.5" y="663.88" font-size="13" fill="#ffff00" text-anchor="middle" textLength="22.6" lengthAdjust="spacingAndGlyphs" xml:space="preserve">LFC</text>
<line x1="806" y1="720" x2="843" y2="720" stroke="#00ff00" stroke-width="2.5"/>
<text x="825.5" y="732.19" font-size="13" fill="#00ff00" text-anchor="middle" textLength="22.6" lengthAdjust="spacingAndGlyphs" xml:space="preserve">LCL</text>
<line x1="806" y1="253.8" x2="842.5" y2="253.8" stroke="#ff00ff" stroke-width="2.5"/>
<text x="825" y="251.99" font-size="13" fill="#ff00ff" text-anchor="middle" textLength="14.5" lengthAdjust="spacingAndGlyphs" xml:space="preserve">EL</text>
<rect x="192" y="628" width="51" height="16" fill="#000" stroke="none" stroke-width="1"/>
<text x="208" y="640.44" font-size="12" fill="#00c8c8" text-anchor="middle" textLength="32.2" lengthAdjust="spacingAndGlyphs" xml:space="preserve">2640m</text>
<rect x="290" y="628" width="52.3" height="14" fill="#000" stroke="none" stroke-width="1"/>
<text x="314.4" y="640.44" font-size="12" fill="#00c8c8" text-anchor="middle" textLength="46.2" lengthAdjust="spacingAndGlyphs" xml:space="preserve">409 m2s2</text>
<rect x="192" y="740" width="25.5" height="14" fill="#000" stroke="none" stroke-width="1"/>
<text x="201.9" y="751.14" font-size="12" fill="#00c8c8" text-anchor="middle" textLength="18.8" lengthAdjust="spacingAndGlyphs" xml:space="preserve">SFC</text>
<line x1="305.5" y1="640" x2="305.5" y2="734.5" stroke="#00e0e0" stroke-width="2"/>
<line x1="290" y1="640" x2="321.25" y2="640" stroke="#00e0e0" stroke-width="2"/>
<line x1="290" y1="734.5" x2="321.25" y2="734.5" stroke="#00e0e0" stroke-width="2"/>
<line x1="30" y1="44" x2="960" y2="44" stroke="#fff" stroke-width="2"/>
<line x1="31" y1="43" x2="31" y2="763.5" stroke="#fff" stroke-width="2"/>
<line x1="30" y1="763.5" x2="960" y2="763.5" stroke="#fff" stroke-width="2.2"/>
<line x1="959.4" y1="44" x2="959.4" y2="763" stroke="#fff" stroke-width="1.2"/>
<path d="M935.6,94.4L913.73,106.52M913.73,106.52L908.89,97.77L917.23,104.58M918.98,103.61L916.56,99.24" fill="none" stroke="#fff" stroke-width="1" stroke-linejoin="miter"/>
<path d="M935.6,184.5L913.73,196.62M913.73,196.62L908.89,187.87L917.23,194.68M918.98,193.71L914.13,184.97M922.48,191.77L917.63,183.03M925.98,189.83L921.13,181.09" fill="none" stroke="#fff" stroke-width="1" stroke-linejoin="miter"/>
<path d="M935.6,253L914.54,266.47M914.54,266.47L909.15,258.04L917.91,264.31M919.59,263.24L914.21,254.81" fill="none" stroke="#fff" stroke-width="1" stroke-linejoin="miter"/>
<path d="M935.6,309.1L915.71,324.25M915.71,324.25L909.65,316.29L918.9,321.83M920.49,320.61L914.43,312.66" fill="none" stroke="#fff" stroke-width="1" stroke-linejoin="miter"/>
<path d="M935.6,357.5L916.48,373.6M916.48,373.6L910.04,365.95L919.54,371.03M921.07,369.74L914.63,362.09M924.13,367.16L917.68,359.51M927.19,364.59L920.74,356.94" fill="none" stroke="#fff" stroke-width="1" stroke-linejoin="miter"/>
<path d="M935.6,398.2L916.59,414.44M916.59,414.44L910.1,406.83L919.63,411.84M921.15,410.54L914.66,402.94M924.19,407.94L917.7,400.34M927.24,405.34L920.74,397.74" fill="none" stroke="#fff" stroke-width="1" stroke-linejoin="miter"/>
<path d="M935.6,434.1L916.68,450.44M916.68,450.44L910.14,442.87L919.7,447.82M921.22,446.51L914.68,438.95M924.25,443.9L917.71,436.33" fill="none" stroke="#fff" stroke-width="1" stroke-linejoin="miter"/>
<path d="M935.6,467.3L915.37,481.99M915.37,481.99L909.5,473.9L918.61,479.64M920.23,478.47L914.35,470.38M923.46,476.12L917.59,468.03" fill="none" stroke="#fff" stroke-width="1" stroke-linejoin="miter"/>
<path d="M935.6,496.2L914.78,510.03M914.78,510.03L909.24,501.71L918.11,507.82M919.77,506.71L914.24,498.39" fill="none" stroke="#fff" stroke-width="1" stroke-linejoin="miter"/>
<path d="M935.6,523.2L914.31,536.3M914.31,536.3L909.07,527.78L917.71,534.2M919.42,533.16L914.18,524.64" fill="none" stroke="#fff" stroke-width="1" stroke-linejoin="miter"/>
<path d="M935.6,547.5L913.95,560M913.95,560L908.95,551.34L917.41,558M919.15,557L916.65,552.67" fill="none" stroke="#fff" stroke-width="1" stroke-linejoin="miter"/>
<path d="M935.6,570.2L913.67,582.21M913.67,582.21L908.87,573.43L917.18,580.28" fill="none" stroke="#fff" stroke-width="1" stroke-linejoin="miter"/>
<path d="M935.6,591.3L914.66,604.95M914.66,604.95L909.2,596.58M918.01,602.77L912.55,594.39M921.36,600.58L915.9,592.21M924.71,598.4L919.25,590.02M928.06,596.21L925.33,592.03" fill="none" stroke="#fff" stroke-width="1" stroke-linejoin="miter"/>
<path d="M935.6,611.1L916.99,627.8M916.99,627.8L910.31,620.35M919.97,625.12L913.29,617.68M922.95,622.45L916.27,615.01M925.92,619.78L919.25,612.34" fill="none" stroke="#fff" stroke-width="1" stroke-linejoin="miter"/>
<path d="M935.6,630.5L917.23,647.45M917.23,647.45L910.45,640.1M920.17,644.74L913.39,637.39M923.11,642.03L916.32,634.68M926.05,639.32L919.26,631.97" fill="none" stroke="#fff" stroke-width="1" stroke-linejoin="miter"/>
<path d="M935.6,648.6L917.92,666.28M917.92,666.28L910.85,659.21M920.75,663.45L913.68,656.38M923.58,660.62L916.51,653.55M926.41,657.79L919.34,650.72" fill="none" stroke="#fff" stroke-width="1" stroke-linejoin="miter"/>
<path d="M935.6,664.6L920.66,684.64M920.66,684.64L912.64,678.67M923.05,681.44L915.03,675.46M925.44,678.23L917.42,672.25M927.83,675.02L919.81,669.05" fill="none" stroke="#fff" stroke-width="1" stroke-linejoin="miter"/>
<path d="M935.6,680.7L923.29,702.46M923.29,702.46L914.59,697.53M925.26,698.98L916.56,694.05M927.23,695.5L918.53,690.57M929.2,692.01L920.49,687.09" fill="none" stroke="#fff" stroke-width="1" stroke-linejoin="miter"/>
<path d="M935.6,695.3L927.25,718.87M927.25,718.87L917.83,715.53M928.59,715.1L919.16,711.76M929.93,711.32L920.5,707.99M931.26,707.55L921.83,704.22" fill="none" stroke="#fff" stroke-width="1" stroke-linejoin="miter"/>
<path d="M935.6,709.3L935.6,734.3M935.6,734.3L925.6,734.3M935.6,730.3L925.6,730.3M935.6,726.3L925.6,726.3M935.6,722.3L925.6,722.3" fill="none" stroke="#fff" stroke-width="1" stroke-linejoin="miter"/>
<path d="M935.6,725.4L944.56,748.74M944.56,748.74L935.22,752.32M943.13,745.01L933.79,748.59M941.69,741.27L932.36,744.85" fill="none" stroke="#fff" stroke-width="1" stroke-linejoin="miter"/>
<path d="M935.6,740L948.1,761.65M948.1,761.65L939.44,766.65M946.1,758.19L937.44,763.19" fill="none" stroke="#fff" stroke-width="1" stroke-linejoin="miter"/>
<line x1="974" y1="46" x2="974" y2="762" stroke="#50301c" stroke-width="2" stroke-dasharray="4,2"/>
<line x1="988" y1="46" x2="988" y2="762" stroke="#50301c" stroke-width="2" stroke-dasharray="4,2"/>
<line x1="1002" y1="46" x2="1002" y2="762" stroke="#50301c" stroke-width="2" stroke-dasharray="4,2"/>
<line x1="1016" y1="46" x2="1016" y2="762" stroke="#50301c" stroke-width="2" stroke-dasharray="4,2"/>
<line x1="1030" y1="46" x2="1030" y2="762" stroke="#50301c" stroke-width="2" stroke-dasharray="4,2"/>
<line x1="1044" y1="46" x2="1044" y2="762" stroke="#50301c" stroke-width="2" stroke-dasharray="4,2"/>
<line x1="960.3" y1="45" x2="960.3" y2="763" stroke="#ffffff" stroke-width="1.2"/>
<line x1="960.3" y1="46" x2="960.3" y2="762" stroke="#b07a5a" stroke-width="1.2" stroke-dasharray="4,2"/>
<line x1="961" y1="76.7" x2="1000" y2="76.7" stroke="#00ffff" stroke-width="2.2"/>
<line x1="961" y1="109.8" x2="1002.9" y2="109.8" stroke="#00ffff" stroke-width="2.2"/>
<line x1="961" y1="141" x2="1007.9" y2="141" stroke="#00ffff" stroke-width="2.2"/>
<line x1="961" y1="171" x2="1014" y2="171" stroke="#00ffff" stroke-width="2.2"/>
<line x1="961" y1="198.8" x2="1020" y2="198.8" stroke="#00ffff" stroke-width="2.2"/>
<line x1="961" y1="225.9" x2="1028.9" y2="225.9" stroke="#00ffff" stroke-width="2.2"/>
<line x1="961" y1="253.9" x2="1032.9" y2="253.9" stroke="#00ffff" stroke-width="2.2"/>
<line x1="961" y1="282.7" x2="1034" y2="282.7" stroke="#00ffff" stroke-width="2.2"/>
<line x1="961" y1="311" x2="1032" y2="311" stroke="#00ffff" stroke-width="2.2"/>
<line x1="961" y1="339.8" x2="1029" y2="339.8" stroke="#00ffff" stroke-width="2.2"/>
<line x1="961" y1="368.6" x2="1024" y2="368.6" stroke="#00ffff" stroke-width="2.2"/>
<line x1="961" y1="397.7" x2="1018" y2="397.7" stroke="#ffff00" stroke-width="2.2"/>
<line x1="961" y1="423.8" x2="1014" y2="423.8" stroke="#ffff00" stroke-width="2.2"/>
<line x1="961" y1="449.7" x2="1013" y2="449.7" stroke="#ffff00" stroke-width="2.2"/>
<line x1="961" y1="473" x2="1013" y2="473" stroke="#ffff00" stroke-width="2.2"/>
<line x1="961" y1="494.8" x2="1010" y2="494.8" stroke="#ffff00" stroke-width="2.2"/>
<line x1="961" y1="516" x2="1005.8" y2="516" stroke="#00ff00" stroke-width="2.2"/>
<line x1="961" y1="534.7" x2="1002" y2="534.7" stroke="#00ff00" stroke-width="2.2"/>
<line x1="961" y1="552.8" x2="998" y2="552.8" stroke="#00ff00" stroke-width="2.2"/>
<line x1="961" y1="570" x2="994" y2="570" stroke="#00ff00" stroke-width="2.2"/>
<line x1="961" y1="586" x2="993" y2="586" stroke="#00ff00" stroke-width="2.2"/>
<line x1="961" y1="600.8" x2="991" y2="600.8" stroke="#00ff00" stroke-width="2.2"/>
<line x1="961" y1="614.9" x2="989.8" y2="614.9" stroke="#00ff00" stroke-width="2.2"/>
<line x1="961" y1="627.9" x2="989" y2="627.9" stroke="#ff0000" stroke-width="2.2"/>
<line x1="961" y1="640.1" x2="989" y2="640.1" stroke="#ff0000" stroke-width="2.2"/>
<line x1="961" y1="651" x2="988" y2="651" stroke="#ff0000" stroke-width="2.2"/>
<line x1="961" y1="660.9" x2="987" y2="660.9" stroke="#ff0000" stroke-width="2.2"/>
<line x1="961" y1="670" x2="987" y2="670" stroke="#ff0000" stroke-width="2.2"/>
<line x1="961" y1="677.9" x2="988" y2="677.9" stroke="#ff0000" stroke-width="2.2"/>
<line x1="961" y1="684" x2="989" y2="684" stroke="#ff0000" stroke-width="2.2"/>
<line x1="961" y1="689.9" x2="989" y2="689.9" stroke="#ff0000" stroke-width="2.2"/>
<line x1="961" y1="695" x2="989" y2="695" stroke="#ff0000" stroke-width="2.2"/>
<line x1="961" y1="699.1" x2="988" y2="699.1" stroke="#ff0000" stroke-width="2.2"/>
<line x1="961" y1="703" x2="988" y2="703" stroke="#ff0000" stroke-width="2.2"/>
<line x1="961" y1="706.1" x2="989" y2="706.1" stroke="#ff0000" stroke-width="2.2"/>
<line x1="961" y1="709" x2="988" y2="709" stroke="#ff0000" stroke-width="2.2"/>
<path d="M961,711.3 H988 L983,717.8 L979.7,728.2 L973.2,735.5 H961 Z" fill="#ff0000"/>
<line x1="1059" y1="45" x2="1059" y2="763" stroke="#fff" stroke-width="2"/>
<text x="1061" y="55.1" font-size="9" fill="#fff" textLength="47" lengthAdjust="spacingAndGlyphs" xml:space="preserve">Inf. Temp. Adv.</text>
<text x="1061" y="65.41" font-size="9" fill="#fff" textLength="21" lengthAdjust="spacingAndGlyphs" xml:space="preserve">(C/hr)</text>
<line x1="1092" y1="46" x2="1092" y2="762" stroke="#8c8c8c" stroke-width="2" stroke-dasharray="4,2"/>
<rect x="1092" y="184.4" width="10.5" height="150" fill="none" stroke="#ff0000" stroke-width="1.5"/>
<rect x="1090.5" y="334.4" width="1.5" height="99.6" fill="none" stroke="#3c8cc8" stroke-width="1.5"/>
<rect x="1084.6" y="434" width="7.4" height="76.2" fill="none" stroke="#3c8cc8" stroke-width="1.5"/>
<rect x="1088.5" y="510.2" width="3.5" height="60" fill="none" stroke="#3c8cc8" stroke-width="1.5"/>
<rect x="1092" y="570.2" width="8.4" height="51" fill="none" stroke="#ff0000" stroke-width="1.5"/>
<rect x="1092" y="621.2" width="6" height="43.3" fill="none" stroke="#ff0000" stroke-width="1.5"/>
<rect x="1092" y="664.5" width="15.6" height="37.5" fill="none" stroke="#ff0000" stroke-width="1.5"/>
<rect x="1092" y="702" width="16.5" height="33.7" fill="none" stroke="#ff0000" stroke-width="1.5"/>
<text x="1110" y="266.11" font-size="9" fill="#ff0000" text-anchor="middle" xml:space="preserve">4.0</text>
<text x="1073.3" y="391.11" font-size="9" fill="#3c8cc8" text-anchor="middle" xml:space="preserve">-0.5</text>
<text x="1073.3" y="478.91" font-size="9" fill="#3c8cc8" text-anchor="middle" xml:space="preserve">-2.8</text>
<text x="1073.7" y="547.11" font-size="9" fill="#3c8cc8" text-anchor="middle" xml:space="preserve">-1.4</text>
<text x="1109.2" y="602.11" font-size="9" fill="#ff0000" text-anchor="middle" xml:space="preserve">3.5</text>
<text x="1109.2" y="649.11" font-size="9" fill="#ff0000" text-anchor="middle" xml:space="preserve">2.4</text>
<text x="1109.2" y="690.11" font-size="9" fill="#ff0000" text-anchor="middle" xml:space="preserve">6.3</text>
<text x="1109.2" y="726.11" font-size="9" fill="#ff0000" text-anchor="middle" xml:space="preserve">6.5</text>
<line x1="1125" y1="45" x2="1125" y2="763" stroke="#fff" stroke-width="2"/>
<line x1="959" y1="45.5" x2="1918" y2="45.5" stroke="#fff" stroke-width="1.6"/>
<line x1="959" y1="763.5" x2="1125" y2="763.5" stroke="#fff" stroke-width="2.2"/>
<g clip-path="url(#hodc)">
<circle cx="1522.0" cy="313.0" r="49.8" fill="none" stroke="#8c8c8c" stroke-width="1" stroke-dasharray="4,3"/>
<circle cx="1522.0" cy="313.0" r="99.6" fill="none" stroke="#8c8c8c" stroke-width="1" stroke-dasharray="4,3"/>
<circle cx="1522.0" cy="313.0" r="149.4" fill="none" stroke="#8c8c8c" stroke-width="1" stroke-dasharray="4,3"/>
<circle cx="1522.0" cy="313.0" r="199.2" fill="none" stroke="#8c8c8c" stroke-width="1" stroke-dasharray="4,3"/>
<circle cx="1522.0" cy="313.0" r="249" fill="none" stroke="#8c8c8c" stroke-width="1" stroke-dasharray="4,3"/>
<circle cx="1522.0" cy="313.0" r="298.8" fill="none" stroke="#8c8c8c" stroke-width="1" stroke-dasharray="4,3"/>
<circle cx="1522.0" cy="313.0" r="348.6" fill="none" stroke="#8c8c8c" stroke-width="1" stroke-dasharray="4,3"/>
<circle cx="1522.0" cy="313.0" r="398.4" fill="none" stroke="#8c8c8c" stroke-width="1" stroke-dasharray="4,3"/>
<circle cx="1522.0" cy="313.0" r="448.2" fill="none" stroke="#8c8c8c" stroke-width="1" stroke-dasharray="4,3"/>
<circle cx="1522.0" cy="313.0" r="498" fill="none" stroke="#8c8c8c" stroke-width="1" stroke-dasharray="4,3"/>
<circle cx="1522.0" cy="313.0" r="547.8" fill="none" stroke="#8c8c8c" stroke-width="1" stroke-dasharray="4,3"/>
<circle cx="1522.0" cy="313.0" r="597.6" fill="none" stroke="#8c8c8c" stroke-width="1" stroke-dasharray="4,3"/>
<circle cx="1522.0" cy="313.0" r="647.4" fill="none" stroke="#8c8c8c" stroke-width="1" stroke-dasharray="4,3"/>
<circle cx="1522.0" cy="313.0" r="697.2" fill="none" stroke="#8c8c8c" stroke-width="1" stroke-dasharray="4,3"/>
<circle cx="1522.0" cy="313.0" r="747" fill="none" stroke="#8c8c8c" stroke-width="1" stroke-dasharray="4,3"/>
<circle cx="1522.0" cy="313.0" r="796.8" fill="none" stroke="#8c8c8c" stroke-width="1" stroke-dasharray="4,3"/>
<line x1="1125" y1="313" x2="1918" y2="313" stroke="#fff" stroke-width="2"/>
<line x1="1522" y1="45" x2="1522" y2="582" stroke="#fff" stroke-width="2"/>
<rect x="1567" y="319" width="14" height="11" fill="#000" stroke="none" stroke-width="1"/>
<text x="1574" y="328.02" font-size="10.5" fill="#fff" text-anchor="middle" textLength="11.4" lengthAdjust="spacingAndGlyphs" xml:space="preserve">10</text>
<rect x="1467.4" y="319" width="14" height="11" fill="#000" stroke="none" stroke-width="1"/>
<text x="1474.4" y="328.02" font-size="10.5" fill="#fff" text-anchor="middle" textLength="11.4" lengthAdjust="spacingAndGlyphs" xml:space="preserve">10</text>
<rect x="1616.8" y="319" width="14" height="11" fill="#000" stroke="none" stroke-width="1"/>
<text x="1623.8" y="328.02" font-size="10.5" fill="#fff" text-anchor="middle" textLength="11.4" lengthAdjust="spacingAndGlyphs" xml:space="preserve">20</text>
<rect x="1417.6" y="319" width="14" height="11" fill="#000" stroke="none" stroke-width="1"/>
<text x="1424.6" y="328.02" font-size="10.5" fill="#fff" text-anchor="middle" textLength="11.4" lengthAdjust="spacingAndGlyphs" xml:space="preserve">20</text>
<rect x="1666.6" y="319" width="14" height="11" fill="#000" stroke="none" stroke-width="1"/>
<text x="1673.6" y="328.02" font-size="10.5" fill="#fff" text-anchor="middle" textLength="11.4" lengthAdjust="spacingAndGlyphs" xml:space="preserve">30</text>
<rect x="1367.8" y="319" width="14" height="11" fill="#000" stroke="none" stroke-width="1"/>
<text x="1374.8" y="328.02" font-size="10.5" fill="#fff" text-anchor="middle" textLength="11.4" lengthAdjust="spacingAndGlyphs" xml:space="preserve">30</text>
<rect x="1716.4" y="319" width="14" height="11" fill="#000" stroke="none" stroke-width="1"/>
<text x="1723.4" y="328.02" font-size="10.5" fill="#fff" text-anchor="middle" textLength="11.4" lengthAdjust="spacingAndGlyphs" xml:space="preserve">40</text>
<rect x="1318" y="319" width="14" height="11" fill="#000" stroke="none" stroke-width="1"/>
<text x="1325" y="328.02" font-size="10.5" fill="#fff" text-anchor="middle" textLength="11.4" lengthAdjust="spacingAndGlyphs" xml:space="preserve">40</text>
<rect x="1766.2" y="319" width="14" height="11" fill="#000" stroke="none" stroke-width="1"/>
<text x="1773.2" y="328.02" font-size="10.5" fill="#fff" text-anchor="middle" textLength="11.4" lengthAdjust="spacingAndGlyphs" xml:space="preserve">50</text>
<rect x="1268.2" y="319" width="14" height="11" fill="#000" stroke="none" stroke-width="1"/>
<text x="1275.2" y="328.02" font-size="10.5" fill="#fff" text-anchor="middle" textLength="11.4" lengthAdjust="spacingAndGlyphs" xml:space="preserve">50</text>
<rect x="1816" y="319" width="14" height="11" fill="#000" stroke="none" stroke-width="1"/>
<text x="1823" y="328.02" font-size="10.5" fill="#fff" text-anchor="middle" textLength="11.4" lengthAdjust="spacingAndGlyphs" xml:space="preserve">60</text>
<rect x="1218.4" y="319" width="14" height="11" fill="#000" stroke="none" stroke-width="1"/>
<text x="1225.4" y="328.02" font-size="10.5" fill="#fff" text-anchor="middle" textLength="11.4" lengthAdjust="spacingAndGlyphs" xml:space="preserve">60</text>
<rect x="1865.8" y="319" width="14" height="11" fill="#000" stroke="none" stroke-width="1"/>
<text x="1872.8" y="328.02" font-size="10.5" fill="#fff" text-anchor="middle" textLength="11.4" lengthAdjust="spacingAndGlyphs" xml:space="preserve">70</text>
<rect x="1168.6" y="319" width="14" height="11" fill="#000" stroke="none" stroke-width="1"/>
<text x="1175.6" y="328.02" font-size="10.5" fill="#fff" text-anchor="middle" textLength="11.4" lengthAdjust="spacingAndGlyphs" xml:space="preserve">70</text>
<rect x="1915.6" y="319" width="14" height="11" fill="#000" stroke="none" stroke-width="1"/>
<text x="1922.6" y="328.02" font-size="10.5" fill="#fff" text-anchor="middle" textLength="11.4" lengthAdjust="spacingAndGlyphs" xml:space="preserve">80</text>
<rect x="1118.8" y="319" width="14" height="11" fill="#000" stroke="none" stroke-width="1"/>
<text x="1125.8" y="328.02" font-size="10.5" fill="#fff" text-anchor="middle" textLength="11.4" lengthAdjust="spacingAndGlyphs" xml:space="preserve">80</text>
<rect x="1527" y="259.5" width="14" height="11" fill="#000" stroke="none" stroke-width="1"/>
<text x="1533.8" y="268.62" font-size="10.5" fill="#fff" text-anchor="middle" textLength="11.4" lengthAdjust="spacingAndGlyphs" xml:space="preserve">10</text>
<rect x="1527" y="358.8" width="14" height="11" fill="#000" stroke="none" stroke-width="1"/>
<text x="1533.8" y="367.92" font-size="10.5" fill="#fff" text-anchor="middle" textLength="11.4" lengthAdjust="spacingAndGlyphs" xml:space="preserve">10</text>
<rect x="1527" y="209.7" width="14" height="11" fill="#000" stroke="none" stroke-width="1"/>
<text x="1533.8" y="218.82" font-size="10.5" fill="#fff" text-anchor="middle" textLength="11.4" lengthAdjust="spacingAndGlyphs" xml:space="preserve">20</text>
<rect x="1527" y="408.6" width="14" height="11" fill="#000" stroke="none" stroke-width="1"/>
<text x="1533.8" y="417.72" font-size="10.5" fill="#fff" text-anchor="middle" textLength="11.4" lengthAdjust="spacingAndGlyphs" xml:space="preserve">20</text>
<rect x="1527" y="159.9" width="14" height="11" fill="#000" stroke="none" stroke-width="1"/>
<text x="1533.8" y="169.02" font-size="10.5" fill="#fff" text-anchor="middle" textLength="11.4" lengthAdjust="spacingAndGlyphs" xml:space="preserve">30</text>
<rect x="1527" y="458.4" width="14" height="11" fill="#000" stroke="none" stroke-width="1"/>
<text x="1533.8" y="467.52" font-size="10.5" fill="#fff" text-anchor="middle" textLength="11.4" lengthAdjust="spacingAndGlyphs" xml:space="preserve">30</text>
<rect x="1527" y="110.1" width="14" height="11" fill="#000" stroke="none" stroke-width="1"/>
<text x="1533.8" y="119.22" font-size="10.5" fill="#fff" text-anchor="middle" textLength="11.4" lengthAdjust="spacingAndGlyphs" xml:space="preserve">40</text>
<rect x="1527" y="508.2" width="14" height="11" fill="#000" stroke="none" stroke-width="1"/>
<text x="1533.8" y="517.32" font-size="10.5" fill="#fff" text-anchor="middle" textLength="11.4" lengthAdjust="spacingAndGlyphs" xml:space="preserve">40</text>
<rect x="1527" y="60.3" width="14" height="11" fill="#000" stroke="none" stroke-width="1"/>
<text x="1533.8" y="69.42" font-size="10.5" fill="#fff" text-anchor="middle" textLength="11.4" lengthAdjust="spacingAndGlyphs" xml:space="preserve">50</text>
<rect x="1527" y="558" width="14" height="11" fill="#000" stroke="none" stroke-width="1"/>
<text x="1533.8" y="567.12" font-size="10.5" fill="#fff" text-anchor="middle" textLength="11.4" lengthAdjust="spacingAndGlyphs" xml:space="preserve">50</text>
<line x1="1470.9" y1="152.6" x2="1480.2" y2="239.2" stroke="#e600e6" stroke-width="1.5"/>
<polyline points="1480.2,239.2 1672.1,222.8 1654,163.75" fill="none" stroke="#00e0e0" stroke-width="1.5" stroke-linejoin="round"/>
<polyline points="1480.2,239.2 1473.75,223.3 1468,208.2 1464.4,193.75 1463.65,176.4 1466.5,162 1470.9,152.6 1479.5,139.7 1489.6,130.3 1502.6,120.9 1514.1,117.7 1524.2,117.3 1537.9,116.9 1546.6,120.6 1556,121.6 1585.5,122.6 1612.2,137.8 1615.1,146.9 1633.9,159.6 1642.5,163 1654,163.75 1663.1,172" fill="none" stroke="#ff0000" stroke-width="2.5" stroke-linejoin="round"/>
<polyline points="1663.1,172 1690.3,181.3 1715.6,198.1 1733.2,202.8 1775.3,166.2 1802.2,138.4" fill="none" stroke="#00ff00" stroke-width="2.5" stroke-linejoin="round"/>
<polyline points="1802.2,138.4 1821.5,99.7 1813.1,84.6 1814,73.6 1831.6,53.5 1837.5,45 1843,37" fill="none" stroke="#ffff00" stroke-width="2.5" stroke-linejoin="round"/>
</g>
<circle cx="1610" cy="92.5" r="5" fill="none" stroke="#e6e6e6" stroke-width="1.5"/>
<text x="1618" y="107.05" font-size="10" fill="#fff" textLength="42.5" lengthAdjust="spacingAndGlyphs" xml:space="preserve">202/48 LM</text>
<circle cx="1672.1" cy="223" r="5" fill="none" stroke="#e6e6e6" stroke-width="1.5"/>
<text x="1678.6" y="236.85" font-size="10" fill="#fff" textLength="43" lengthAdjust="spacingAndGlyphs" xml:space="preserve">239/35 RM</text>
<rect x="1682.9" y="143.2" width="8.2" height="7.6" fill="none" stroke="#d29600" stroke-width="1.6"/>
<text x="1694" y="152.75" font-size="10" fill="#d29600" textLength="28" lengthAdjust="spacingAndGlyphs" xml:space="preserve">224/48</text>
<circle cx="1720" cy="308.5" r="3" fill="none" stroke="#00a0e6" stroke-width="1.2"/>
<text x="1727.8" y="319.35" font-size="10" fill="#00a0e6" textLength="45.8" lengthAdjust="spacingAndGlyphs" xml:space="preserve">UP=269/40</text>
<circle cx="1921" cy="140" r="3" fill="none" stroke="#00a0e6" stroke-width="1.5"/>
<text x="1140.2" y="557.94" font-size="12" fill="#00dcdc" textLength="96.6" lengthAdjust="spacingAndGlyphs" xml:space="preserve">Critical Angle = 91</text>
<line x1="1918" y1="45" x2="1918" y2="583" stroke="#fff" stroke-width="2"/>
<line x1="1125" y1="582" x2="1919" y2="582" stroke="#fff" stroke-width="2"/>
<line x1="1224" y1="583" x2="1224" y2="762" stroke="#0c3d7a" stroke-width="2.2"/>
<line x1="1126" y1="672.9" x2="1322" y2="672.9" stroke="#0c3d7a" stroke-width="2.2"/>
<line x1="1223.1" y1="673.1" x2="1267.3" y2="646.9" stroke="#fff" stroke-width="2.4"/>
<circle cx="1216" cy="660.5" r="5.1" fill="none" stroke="#ff0000" stroke-width="1.2"/>
<circle cx="1217.5" cy="663.2" r="5.1" fill="none" stroke="#ff0000" stroke-width="1.2"/>
<circle cx="1219.2" cy="665.8" r="5.1" fill="none" stroke="#ff0000" stroke-width="1.2"/>
<circle cx="1221" cy="668.3" r="5.1" fill="none" stroke="#ff0000" stroke-width="1.2"/>
<circle cx="1222.6" cy="670.8" r="5.1" fill="none" stroke="#ff0000" stroke-width="1.2"/>
<circle cx="1223.8" cy="673" r="5.1" fill="none" stroke="#ff0000" stroke-width="1.2"/>
<circle cx="1224" cy="648.5" r="5.1" fill="none" stroke="#00ff00" stroke-width="1.2"/>
<circle cx="1221" cy="649.5" r="5.1" fill="none" stroke="#00ff00" stroke-width="1.2"/>
<circle cx="1218.5" cy="651.5" r="5.1" fill="none" stroke="#00ff00" stroke-width="1.2"/>
<circle cx="1216.5" cy="653.8" r="5.1" fill="none" stroke="#00ff00" stroke-width="1.2"/>
<circle cx="1215.6" cy="656.2" r="5.1" fill="none" stroke="#00ff00" stroke-width="1.2"/>
<circle cx="1215.6" cy="658.5" r="5.1" fill="none" stroke="#00ff00" stroke-width="1.2"/>
<circle cx="1225.4" cy="648.1" r="5.1" fill="none" stroke="#ffff00" stroke-width="1.2"/>
<circle cx="1231.5" cy="643.5" r="5.1" fill="none" stroke="#ffff00" stroke-width="1.2"/>
<circle cx="1237.7" cy="637.2" r="5.1" fill="none" stroke="#00c8d2" stroke-width="1.2"/>
<circle cx="1245.6" cy="628.3" r="5.1" fill="none" stroke="#00c8d2" stroke-width="1.2"/>
<circle cx="1257.3" cy="619.2" r="5.1" fill="none" stroke="#e600e6" stroke-width="1.2"/>
<text x="1300" y="593.45" font-size="10" fill="#fff" text-anchor="middle" textLength="36" lengthAdjust="spacingAndGlyphs" xml:space="preserve">74.0 deg</text>
<text x="1130.3" y="762.25" font-size="10" fill="#fff" textLength="53.5" lengthAdjust="spacingAndGlyphs" xml:space="preserve">Storm Slinky</text>
<line x1="1125" y1="582" x2="1125" y2="764" stroke="#fff" stroke-width="2"/>
<line x1="1323.5" y1="582" x2="1323.5" y2="764" stroke="#fff" stroke-width="2"/>
<line x1="1125" y1="763.8" x2="1919" y2="763.8" stroke="#fff" stroke-width="2"/>
<line x1="1324" y1="611.9" x2="1330" y2="611.9" stroke="#fff" stroke-width="2"/>
<text x="1341.4" y="615.35" font-size="10" fill="#fff" text-anchor="middle" textLength="15.5" lengthAdjust="spacingAndGlyphs" xml:space="preserve">600</text>
<line x1="1324" y1="653.75" x2="1330" y2="653.75" stroke="#fff" stroke-width="2"/>
<text x="1341.4" y="657.2" font-size="10" fill="#fff" text-anchor="middle" textLength="15.5" lengthAdjust="spacingAndGlyphs" xml:space="preserve">700</text>
<line x1="1324" y1="696.9" x2="1330" y2="696.9" stroke="#fff" stroke-width="2"/>
<text x="1341.4" y="700.35" font-size="10" fill="#fff" text-anchor="middle" textLength="15.5" lengthAdjust="spacingAndGlyphs" xml:space="preserve">800</text>
<line x1="1324" y1="738.7" x2="1330" y2="738.7" stroke="#fff" stroke-width="2"/>
<text x="1341.4" y="742.15" font-size="10" fill="#fff" text-anchor="middle" textLength="15.5" lengthAdjust="spacingAndGlyphs" xml:space="preserve">900</text>
<line x1="1337.5" y1="757.5" x2="1337.5" y2="763" stroke="#fff" stroke-width="2"/>
<text x="1337.5" y="757.15" font-size="10" fill="#fff" text-anchor="middle" textLength="15.5" lengthAdjust="spacingAndGlyphs" xml:space="preserve">310</text>
<line x1="1375" y1="757.5" x2="1375" y2="763" stroke="#fff" stroke-width="2"/>
<text x="1375" y="757.15" font-size="10" fill="#fff" text-anchor="middle" textLength="15.5" lengthAdjust="spacingAndGlyphs" xml:space="preserve">320</text>
<line x1="1412.5" y1="757.5" x2="1412.5" y2="763" stroke="#fff" stroke-width="2"/>
<text x="1412.5" y="757.15" font-size="10" fill="#fff" text-anchor="middle" textLength="15.5" lengthAdjust="spacingAndGlyphs" xml:space="preserve">330</text>
<line x1="1450" y1="757.5" x2="1450" y2="763" stroke="#fff" stroke-width="2"/>
<text x="1450" y="757.15" font-size="10" fill="#fff" text-anchor="middle" textLength="15.5" lengthAdjust="spacingAndGlyphs" xml:space="preserve">340</text>
<line x1="1487.5" y1="757.5" x2="1487.5" y2="763" stroke="#fff" stroke-width="2"/>
<text x="1487.5" y="757.15" font-size="10" fill="#fff" text-anchor="middle" textLength="15.5" lengthAdjust="spacingAndGlyphs" xml:space="preserve">350</text>
<text x="1415.3" y="623.62" font-size="16" fill="#fff" text-anchor="middle" textLength="64" lengthAdjust="spacingAndGlyphs" xml:space="preserve">ThetaE v.</text>
<text x="1415.3" y="643.32" font-size="16" fill="#fff" text-anchor="middle" textLength="33" lengthAdjust="spacingAndGlyphs" xml:space="preserve">Pres</text>
<polyline points="1361,593.75 1362.8,607.8 1370.3,620 1386.25,632.2 1395.6,644.4 1414.4,655.6 1426.6,666 1433.1,676.25 1435,685.6 1444.4,693.1 1464,701.6 1443.4,708.1 1447.2,713.75 1454.7,718.4 1460.3,733.4 1465,736.25 1466.9,741.9 1467.8,751.25 1468.75,763.4" fill="none" stroke="#ff0000" stroke-width="2.5" stroke-linejoin="round"/>
<line x1="1522.3" y1="582" x2="1522.3" y2="764" stroke="#fff" stroke-width="2"/>
<text x="1538.4" y="605.31" font-size="9" fill="#fff" text-anchor="middle" textLength="8.6" lengthAdjust="spacingAndGlyphs" xml:space="preserve">14</text>
<line x1="1715" y1="602.2" x2="1720" y2="602.2" stroke="#a0a0a0" stroke-width="2"/>
<text x="1538.4" y="628.21" font-size="9" fill="#fff" text-anchor="middle" textLength="8.6" lengthAdjust="spacingAndGlyphs" xml:space="preserve">12</text>
<line x1="1715" y1="625.1" x2="1720" y2="625.1" stroke="#a0a0a0" stroke-width="2"/>
<text x="1538.4" y="651.21" font-size="9" fill="#fff" text-anchor="middle" textLength="8.6" lengthAdjust="spacingAndGlyphs" xml:space="preserve">10</text>
<line x1="1715" y1="648.1" x2="1720" y2="648.1" stroke="#a0a0a0" stroke-width="2"/>
<text x="1538.4" y="674.11" font-size="9" fill="#fff" text-anchor="middle" textLength="4.8" lengthAdjust="spacingAndGlyphs" xml:space="preserve">8</text>
<line x1="1715" y1="671" x2="1720" y2="671" stroke="#a0a0a0" stroke-width="2"/>
<text x="1538.4" y="696.21" font-size="9" fill="#fff" text-anchor="middle" textLength="4.8" lengthAdjust="spacingAndGlyphs" xml:space="preserve">6</text>
<line x1="1715" y1="693.1" x2="1720" y2="693.1" stroke="#a0a0a0" stroke-width="2"/>
<text x="1538.4" y="719" font-size="9" fill="#fff" text-anchor="middle" textLength="4.8" lengthAdjust="spacingAndGlyphs" xml:space="preserve">4</text>
<line x1="1715" y1="715.9" x2="1720" y2="715.9" stroke="#a0a0a0" stroke-width="2"/>
<text x="1538.4" y="742.11" font-size="9" fill="#fff" text-anchor="middle" textLength="4.8" lengthAdjust="spacingAndGlyphs" xml:space="preserve">2</text>
<line x1="1715" y1="739" x2="1720" y2="739" stroke="#a0a0a0" stroke-width="2"/>
<line x1="1544" y1="757" x2="1544" y2="763" stroke="#a0a0a0" stroke-width="2"/>
<line x1="1544" y1="582" x2="1544" y2="587.5" stroke="#a0a0a0" stroke-width="2"/>
<line x1="1566.9" y1="757" x2="1566.9" y2="763" stroke="#a0a0a0" stroke-width="2"/>
<line x1="1566.9" y1="582" x2="1566.9" y2="587.5" stroke="#a0a0a0" stroke-width="2"/>
<line x1="1589.8" y1="757" x2="1589.8" y2="763" stroke="#a0a0a0" stroke-width="2"/>
<line x1="1589.8" y1="582" x2="1589.8" y2="587.5" stroke="#a0a0a0" stroke-width="2"/>
<line x1="1612.7" y1="757" x2="1612.7" y2="763" stroke="#a0a0a0" stroke-width="2"/>
<line x1="1612.7" y1="582" x2="1612.7" y2="587.5" stroke="#a0a0a0" stroke-width="2"/>
<line x1="1635.6" y1="757" x2="1635.6" y2="763" stroke="#a0a0a0" stroke-width="2"/>
<line x1="1635.6" y1="582" x2="1635.6" y2="587.5" stroke="#a0a0a0" stroke-width="2"/>
<line x1="1658.5" y1="757" x2="1658.5" y2="763" stroke="#a0a0a0" stroke-width="2"/>
<line x1="1658.5" y1="582" x2="1658.5" y2="587.5" stroke="#a0a0a0" stroke-width="2"/>
<line x1="1681.4" y1="757" x2="1681.4" y2="763" stroke="#a0a0a0" stroke-width="2"/>
<line x1="1681.4" y1="582" x2="1681.4" y2="587.5" stroke="#a0a0a0" stroke-width="2"/>
<line x1="1704.3" y1="757" x2="1704.3" y2="763" stroke="#a0a0a0" stroke-width="2"/>
<line x1="1704.3" y1="582" x2="1704.3" y2="587.5" stroke="#a0a0a0" stroke-width="2"/>
<line x1="1555.9" y1="583" x2="1555.9" y2="762" stroke="#a8a8a8" stroke-width="2" stroke-dasharray="4,2"/>
<line x1="1612.9" y1="583" x2="1612.9" y2="670.6" stroke="#7a2a8a" stroke-width="2" stroke-dasharray="4,2"/>
<line x1="1681" y1="583" x2="1681" y2="670.6" stroke="#7a2a8a" stroke-width="2" stroke-dasharray="4,2"/>
<text x="1633" y="607.11" font-size="9" fill="#9a20c8" text-anchor="middle" textLength="25.5" lengthAdjust="spacingAndGlyphs" xml:space="preserve">Classic</text>
<text x="1633" y="617.11" font-size="9" fill="#9a20c8" text-anchor="middle" textLength="32" lengthAdjust="spacingAndGlyphs" xml:space="preserve">Supercell</text>
<clipPath id="srwc"><rect x="1523" y="583" width="197" height="180"/></clipPath>
<g clip-path="url(#srwc)">
<polyline points="1539.4,582.5 1546,582.5 1568.4,587.2 1575,593.75 1593.75,601.25 1620,610.6 1642.5,617.2 1659.4,621.9 1673.4,628.4 1678.1,635 1663.1,650 1631.25,663.1 1616.25,670.6 1609.7,682.8 1602.2,688.4 1565.6,704.4 1550.6,708.1 1543.1,714.7 1542.2,723.1 1545,728.75 1549.7,731.6 1555.3,740 1567.5,744.7 1582.5,749 1608.75,752.75 1620,756 1616.25,759.7 1609.7,762.5" fill="none" stroke="#ff0000" stroke-width="2.5" stroke-linejoin="round"/>
</g>
<text x="1559" y="597.11" font-size="9" fill="#fff" text-anchor="middle" textLength="30" lengthAdjust="spacingAndGlyphs" xml:space="preserve">SR Wind</text>
<text x="1559" y="607.61" font-size="9" fill="#fff" text-anchor="middle" textLength="8" lengthAdjust="spacingAndGlyphs" xml:space="preserve">v.</text>
<text x="1559" y="617.11" font-size="9" fill="#fff" text-anchor="middle" textLength="23" lengthAdjust="spacingAndGlyphs" xml:space="preserve">Height</text>
<line x1="1564.1" y1="692.2" x2="1564.1" y2="716.6" stroke="#6aa0ff" stroke-width="2.5"/>
<line x1="1660.9" y1="635" x2="1660.9" y2="659.75" stroke="#9a00e6" stroke-width="2.5"/>
<line x1="1590" y1="738.1" x2="1590" y2="763" stroke="#b40000" stroke-width="2"/>
<line x1="1720.3" y1="582" x2="1720.3" y2="764" stroke="#fff" stroke-width="2"/>
<line x1="1722.2" y1="582" x2="1722.2" y2="764" stroke="#fff" stroke-width="1.5"/>
<line x1="1722" y1="608.4" x2="1918" y2="608.4" stroke="#fff" stroke-width="1.5"/>
<line x1="1918" y1="582" x2="1918" y2="765" stroke="#fff" stroke-width="2"/>
<text x="1818.75" y="602.33" font-size="14" fill="#fff" text-anchor="middle" textLength="89" lengthAdjust="spacingAndGlyphs" xml:space="preserve">Psbl Haz. Type</text>
<text x="1819.7" y="685.83" font-size="14" fill="#ff0000" text-anchor="middle" textLength="25.7" lengthAdjust="spacingAndGlyphs" xml:space="preserve">TOR</text>
<g font-size="14">
<text x="62.5" y="799.83" font-size="14" fill="#fff" text-anchor="middle" xml:space="preserve">PCL</text>
<text x="121.5" y="799.83" font-size="14" fill="#fff" text-anchor="middle" xml:space="preserve">CAPE</text>
<text x="180.6" y="799.83" font-size="14" fill="#fff" text-anchor="middle" xml:space="preserve">CINH</text>
<text x="239.5" y="799.83" font-size="14" fill="#fff" text-anchor="middle" xml:space="preserve">LCL</text>
<text x="298.6" y="799.83" font-size="14" fill="#fff" text-anchor="middle" xml:space="preserve">LI</text>
<text x="357.8" y="799.83" font-size="14" fill="#fff" text-anchor="middle" xml:space="preserve">LFC</text>
<text x="416.4" y="799.83" font-size="14" fill="#fff" text-anchor="middle" xml:space="preserve">EL</text>
<line x1="4" y1="802.5" x2="482" y2="802.5" stroke="#fff" stroke-width="1"/>
<text x="62.5" y="818.83" font-size="14" fill="#fff" text-anchor="middle" xml:space="preserve">SFC</text>
<text x="121.5" y="818.83" font-size="14" fill="#fff" text-anchor="middle" xml:space="preserve">2610</text>
<text x="180.5" y="818.83" font-size="14" fill="#fff" text-anchor="middle" xml:space="preserve">-54</text>
<text x="239.5" y="818.83" font-size="14" fill="#fff" text-anchor="middle" xml:space="preserve">445</text>
<text x="298.5" y="818.83" font-size="14" fill="#fff" text-anchor="middle" xml:space="preserve">-8</text>
<text x="357.5" y="818.83" font-size="14" fill="#fff" text-anchor="middle" xml:space="preserve">1946</text>
<text x="416.5" y="818.83" font-size="14" fill="#fff" text-anchor="middle" xml:space="preserve">11699</text>
<text x="62.5" y="831.83" font-size="14" fill="#fff" text-anchor="middle" xml:space="preserve">ML</text>
<text x="121.5" y="831.83" font-size="14" fill="#fff" text-anchor="middle" xml:space="preserve">2479</text>
<text x="180.5" y="831.83" font-size="14" fill="#fff" text-anchor="middle" xml:space="preserve">-61</text>
<text x="239.5" y="831.83" font-size="14" fill="#fff" text-anchor="middle" xml:space="preserve">651</text>
<text x="298.5" y="831.83" font-size="14" fill="#fff" text-anchor="middle" xml:space="preserve">-8</text>
<text x="357.5" y="831.83" font-size="14" fill="#fff" text-anchor="middle" xml:space="preserve">2076</text>
<text x="416.5" y="831.83" font-size="14" fill="#fff" text-anchor="middle" xml:space="preserve">11405</text>
<text x="62.5" y="844.83" font-size="14" fill="#fff" text-anchor="middle" xml:space="preserve">FCST</text>
<text x="121.5" y="844.83" font-size="14" fill="#fff" text-anchor="middle" xml:space="preserve">3388</text>
<text x="180.5" y="844.83" font-size="14" fill="#fff" text-anchor="middle" xml:space="preserve">-15</text>
<text x="239.5" y="844.83" font-size="14" fill="#fff" text-anchor="middle" xml:space="preserve">1152</text>
<text x="298.5" y="844.83" font-size="14" fill="#fff" text-anchor="middle" xml:space="preserve">-10</text>
<text x="357.5" y="844.83" font-size="14" fill="#fff" text-anchor="middle" xml:space="preserve">1624</text>
<text x="416.5" y="844.83" font-size="14" fill="#fff" text-anchor="middle" xml:space="preserve">11861</text>
<text x="62.5" y="857.83" font-size="14" fill="#00ffff" text-anchor="middle" xml:space="preserve">MU</text>
<text x="121.5" y="857.83" font-size="14" fill="#ffff00" text-anchor="middle" xml:space="preserve">2610</text>
<text x="180.5" y="857.83" font-size="14" fill="#a0700a" text-anchor="middle" xml:space="preserve">-54</text>
<text x="239.5" y="857.83" font-size="14" fill="#fff" text-anchor="middle" xml:space="preserve">445</text>
<text x="298.5" y="857.83" font-size="14" fill="#fff" text-anchor="middle" xml:space="preserve">-8</text>
<text x="357.5" y="857.83" font-size="14" fill="#fff" text-anchor="middle" xml:space="preserve">1946</text>
<text x="416.5" y="857.83" font-size="14" fill="#fff" text-anchor="middle" xml:space="preserve">11699</text>
<rect x="6.5" y="847.5" width="469" height="14" fill="none" stroke="#7a5020" stroke-width="1"/>
<line x1="4" y1="863.5" x2="482" y2="863.5" stroke="#fff" stroke-width="1"/>
<text x="9.4" y="881.13" font-size="14" fill="#fff" xml:space="preserve">PW = 1.3in</text>
<text x="168.3" y="881.13" font-size="14" fill="#fff" xml:space="preserve">K = 39</text>
<text x="286.3" y="881.13" font-size="14" fill="#fff" xml:space="preserve">WNDG = 0.0</text>
<text x="9.4" y="894.03" font-size="14" fill="#fff" xml:space="preserve">MeanW = 13.9g/kg</text>
<text x="168.3" y="894.03" font-size="14" fill="#fff" xml:space="preserve">TT = 56</text>
<text x="286.3" y="894.03" font-size="14" fill="#fff" xml:space="preserve">TEI = 29</text>
<text x="9.4" y="906.93" font-size="14" fill="#fff" xml:space="preserve">LowRH = 89%</text>
<text x="168.3" y="906.93" font-size="14" fill="#fff" xml:space="preserve">ConvT = 86F</text>
<text x="286.3" y="906.93" font-size="14" fill="#fff" xml:space="preserve">3CAPE = 77</text>
<text x="9.4" y="919.83" font-size="14" fill="#fff" xml:space="preserve">MidRH = 65%</text>
<text x="168.3" y="919.83" font-size="14" fill="#fff" xml:space="preserve">maxT = 82F</text>
<text x="9.4" y="932.73" font-size="14" fill="#fff" xml:space="preserve">DCAPE = 1281</text>
<text x="168.3" y="932.73" font-size="14" fill="#fff" xml:space="preserve">ESP = 0.2</text>
<text x="9.4" y="945.63" font-size="14" fill="#fff" xml:space="preserve">DownT = 53F</text>
<text x="168.3" y="945.63" font-size="14" fill="#fff" xml:space="preserve">MMP = 0.99</text>
<text x="286.3" y="945.63" font-size="14" fill="#fff" xml:space="preserve">SigSvr = 86627 m3/s3</text>
<line x1="4" y1="948.6" x2="482" y2="948.6" stroke="#fff" stroke-width="1"/>
<line x1="328.3" y1="948.6" x2="328.3" y2="1037" stroke="#fff" stroke-width="1"/>
<text x="9.4" y="966.03" font-size="14" fill="#fff" xml:space="preserve">Sfc-3km AGL LR = 7.1 C/km</text>
<text x="9.4" y="978.98" font-size="14" fill="#fff" xml:space="preserve">3-6km AGL LR = 7.2 C/km</text>
<text x="9.4" y="991.93" font-size="14" fill="#fff" xml:space="preserve">850-500mb LR = 7.2 C/km</text>
<text x="9.4" y="1004.88" font-size="14" fill="#fff" xml:space="preserve">700-500mb LR = 7.5 C/km</text>
<text x="333.5" y="966.03" font-size="14" fill="#d200ff" xml:space="preserve">Supercell = 21.4</text>
<text x="333.5" y="978.98" font-size="14" fill="#ff0000" xml:space="preserve">STP (cin) = 6.3</text>
<text x="333.5" y="991.93" font-size="14" fill="#ff0000" xml:space="preserve">STP (fix) = 6.0</text>
<text x="333.5" y="1004.88" font-size="14" fill="#ff0000" xml:space="preserve">SHIP = 2.2</text>
<text x="623" y="802.33" font-size="14" fill="#fff" text-anchor="middle" xml:space="preserve">SRH (m2/s2)</text>
<text x="741.8" y="802.33" font-size="14" fill="#fff" text-anchor="middle" xml:space="preserve">Shear (kt)</text>
<text x="835" y="802.33" font-size="14" fill="#fff" text-anchor="middle" xml:space="preserve">MnWind</text>
<text x="924" y="802.33" font-size="14" fill="#fff" text-anchor="middle" xml:space="preserve">SRW</text>
<line x1="483" y1="805.6" x2="960" y2="805.6" stroke="#fff" stroke-width="1"/>
<text x="488.5" y="821.13" font-size="14" fill="#fff" xml:space="preserve">SFC-1km</text>
<text x="670.6" y="821.13" font-size="14" fill="#fff" text-anchor="end" xml:space="preserve">345</text>
<text x="764.7" y="821.13" font-size="14" fill="#fff" text-anchor="end" xml:space="preserve">28</text>
<text x="859" y="821.13" font-size="14" fill="#fff" text-anchor="end" xml:space="preserve">168/32</text>
<text x="952.5" y="821.13" font-size="14" fill="#fff" text-anchor="end" xml:space="preserve">109/39</text>
<text x="488.5" y="834.33" font-size="14" fill="#fff" xml:space="preserve">SFC-3km</text>
<text x="670.6" y="834.33" font-size="14" fill="#fff" text-anchor="end" xml:space="preserve">413</text>
<text x="764.7" y="834.33" font-size="14" fill="#fff" text-anchor="end" xml:space="preserve">39</text>
<text x="859" y="834.33" font-size="14" fill="#fff" text-anchor="end" xml:space="preserve">197/33</text>
<text x="952.5" y="834.33" font-size="14" fill="#fff" text-anchor="end" xml:space="preserve">124/25</text>
<text x="488.5" y="847.33" font-size="14" fill="#fff" xml:space="preserve">Eff Inflow Layer</text>
<text x="670.6" y="847.33" font-size="14" fill="#fff" text-anchor="end" xml:space="preserve">409</text>
<text x="764.7" y="847.33" font-size="14" fill="#fff" text-anchor="end" xml:space="preserve">38</text>
<text x="859" y="847.33" font-size="14" fill="#fff" text-anchor="end" xml:space="preserve">194/33</text>
<text x="952.5" y="847.33" font-size="14" fill="#fff" text-anchor="end" xml:space="preserve">122/26</text>
<text x="488.5" y="866.83" font-size="14" fill="#fff" xml:space="preserve">SFC-6km</text>
<text x="764.7" y="866.83" font-size="14" fill="#fff" text-anchor="end" xml:space="preserve">68</text>
<text x="859" y="866.83" font-size="14" fill="#fff" text-anchor="end" xml:space="preserve">214/36</text>
<text x="952.5" y="866.83" font-size="14" fill="#fff" text-anchor="end" xml:space="preserve">141/16</text>
<text x="488.5" y="879.83" font-size="14" fill="#fff" xml:space="preserve">SFC-8km</text>
<text x="764.7" y="879.83" font-size="14" fill="#fff" text-anchor="end" xml:space="preserve">75</text>
<text x="859" y="879.83" font-size="14" fill="#fff" text-anchor="end" xml:space="preserve">218/40</text>
<text x="952.5" y="879.83" font-size="14" fill="#fff" text-anchor="end" xml:space="preserve">157/15</text>
<text x="488.5" y="892.83" font-size="14" fill="#fff" xml:space="preserve">LCL-EL (Cloud Layer)</text>
<text x="764.7" y="892.83" font-size="14" fill="#fff" text-anchor="end" xml:space="preserve">100</text>
<text x="859" y="892.83" font-size="14" fill="#fff" text-anchor="end" xml:space="preserve">224/48</text>
<text x="952.5" y="892.83" font-size="14" fill="#fff" text-anchor="end" xml:space="preserve">190/17</text>
<text x="488.5" y="905.83" font-size="14" fill="#fff" xml:space="preserve">Eff Shear (EBWD)</text>
<text x="764.7" y="905.83" font-size="14" fill="#fff" text-anchor="end" xml:space="preserve">66</text>
<text x="859" y="905.83" font-size="14" fill="#fff" text-anchor="end" xml:space="preserve">214/36</text>
<text x="952.5" y="905.83" font-size="14" fill="#fff" text-anchor="end" xml:space="preserve">139/16</text>
<text x="488.3" y="925.33" font-size="14" fill="#fff" xml:space="preserve">BRN Shear =</text>
<text x="764.7" y="926.33" font-size="14" fill="#fff" text-anchor="end" xml:space="preserve">134 m2/s2</text>
<text x="488.3" y="938.33" font-size="14" fill="#fff" xml:space="preserve">4-6km SR Wind =</text>
<text x="764.7" y="939.33" font-size="14" fill="#fff" text-anchor="end" xml:space="preserve">246/14 kt</text>
<text x="488.3" y="957.83" font-size="14" fill="#fff" xml:space="preserve">...Storm Motion Vectors...</text>
<text x="488.3" y="970.83" font-size="14" fill="#fff" xml:space="preserve">Bunkers Right =</text>
<text x="488.3" y="983.83" font-size="14" fill="#fff" xml:space="preserve">Bunkers Left =</text>
<text x="488.3" y="996.83" font-size="14" fill="#fff" xml:space="preserve">Corfidi Downshear =</text>
<text x="488.3" y="1009.83" font-size="14" fill="#fff" xml:space="preserve">Corfidi Upshear =</text>
<text x="764.7" y="971.13" font-size="14" fill="#0a9ad8" text-anchor="end" xml:space="preserve">239/35 kt</text>
<text x="764.7" y="984.23" font-size="14" fill="#ff5046" text-anchor="end" xml:space="preserve">202/48 kt</text>
<text x="764.7" y="997.33" font-size="14" fill="#fff" text-anchor="end" xml:space="preserve">247/88 kt</text>
<text x="764.7" y="1010.43" font-size="14" fill="#fff" text-anchor="end" xml:space="preserve">269/40 kt</text>
<path d="M859.1,951.5 L837.9,964.9 L832.1,956.2 L840.7,963.1 M841.1,963.1 L837.1,953.3 M845.4,959.8 L842.9,955.1" fill="none" stroke="#1e78c8" stroke-width="1.1"/>
<path d="M859.2,953 L855,976.6 L845,974.8 M855.8,972 L845.5,970.6 M856.5,968 L846.5,966.6 M857.2,964.6 L847.2,962.8" fill="none" stroke="#c80000" stroke-width="1.1"/>
<text x="859.2" y="993.03" font-size="14" fill="#1e78c8" text-anchor="middle" xml:space="preserve">1km &amp; 6km AGL</text>
<text x="859.2" y="1009.13" font-size="14" fill="#1e78c8" text-anchor="middle" xml:space="preserve">Wind Barbs</text>
<text x="1200" y="810.23" font-size="23" fill="#fff" text-anchor="middle" textLength="361" lengthAdjust="spacingAndGlyphs" xml:space="preserve">SARS - Sounding Analogue System</text>
<line x1="961" y1="816.7" x2="1439" y2="816.7" stroke="#fff" stroke-width="1.2"/>
<line x1="1200.3" y1="816.7" x2="1200.3" y2="1037" stroke="#fff" stroke-width="1.2"/>
<text x="1079" y="833.72" font-size="16" fill="#fff" text-anchor="middle" xml:space="preserve" letter-spacing="1">SUPERCELL</text>
<text x="1315.5" y="833.72" font-size="16" fill="#fff" text-anchor="middle" xml:space="preserve" letter-spacing="1">SGFNT HAIL</text>
<text x="966.7" y="849.33" font-size="14" fill="#ff0000" xml:space="preserve">03050500.UMN</text>
<text x="1141.8" y="849.33" font-size="14" fill="#ff0000" xml:space="preserve">SIG</text>
<text x="966.7" y="862.33" font-size="14" fill="#ff0000" xml:space="preserve">03051100.UIN</text>
<text x="1141.8" y="862.33" font-size="14" fill="#ff0000" xml:space="preserve">SIG</text>
<text x="966.7" y="875.33" font-size="14" fill="#ff0000" xml:space="preserve">03050701.CGI</text>
<text x="1141.8" y="875.33" font-size="14" fill="#ff0000" xml:space="preserve">SIG</text>
<text x="966.7" y="888.33" font-size="14" fill="#ff0000" xml:space="preserve">03050501.LZK</text>
<text x="1141.8" y="888.33" font-size="14" fill="#ff0000" xml:space="preserve">SIG</text>
<text x="966.7" y="901.33" font-size="14" fill="#ff0000" xml:space="preserve">98041700.BMX</text>
<text x="1141.8" y="901.33" font-size="14" fill="#ff0000" xml:space="preserve">SIG</text>
<text x="966.7" y="914.33" font-size="14" fill="#ff0000" xml:space="preserve">66060900.TOP</text>
<text x="1141.8" y="914.33" font-size="14" fill="#ff0000" xml:space="preserve">SIG</text>
<text x="966.7" y="927.33" font-size="14" fill="#00b4ff" xml:space="preserve">03050918.CHO</text>
<text x="1141.8" y="927.33" font-size="14" fill="#00b4ff" xml:space="preserve">WEAK</text>
<text x="966.7" y="940.33" font-size="14" fill="#a07818" xml:space="preserve">03042400.SEP</text>
<text x="1141.8" y="940.33" font-size="14" fill="#a07818" xml:space="preserve">NON</text>
<text x="966.7" y="953.33" font-size="14" fill="#a07818" xml:space="preserve">03050520.MKL</text>
<text x="1141.8" y="953.33" font-size="14" fill="#a07818" xml:space="preserve">NON</text>
<text x="1208.7" y="849.33" font-size="14" fill="#ff0000" xml:space="preserve">08020600.SHV</text>
<text x="1417.7" y="849.33" font-size="14" fill="#ff0000" text-anchor="end" xml:space="preserve">4.25</text>
<text x="1208.7" y="862.33" font-size="14" fill="#ff0000" xml:space="preserve">02060500.AMA</text>
<text x="1417.7" y="862.33" font-size="14" fill="#ff0000" text-anchor="end" xml:space="preserve">2.75</text>
<text x="1208.7" y="875.33" font-size="14" fill="#00b4ff" xml:space="preserve">06100400.MPX</text>
<text x="1417.7" y="875.33" font-size="14" fill="#00b4ff" text-anchor="end" xml:space="preserve">1.75</text>
<text x="1079" y="1018.47" font-size="15" fill="#ff00ff" text-anchor="middle" textLength="125.5" lengthAdjust="spacingAndGlyphs" xml:space="preserve">(10 loose matches)</text>
<text x="1079" y="1033.67" font-size="15" fill="#ff00ff" text-anchor="middle" xml:space="preserve">SARS: 80% TOR</text>
<text x="1316" y="1018.47" font-size="15" fill="#ff00ff" text-anchor="middle" textLength="125.5" lengthAdjust="spacingAndGlyphs" xml:space="preserve">(64 loose matches)</text>
<text x="1316" y="1033.67" font-size="15" fill="#ff00ff" text-anchor="middle" xml:space="preserve">SARS: 77% SIG</text>
<line x1="1440" y1="1018.2" x2="1917" y2="1018.2" stroke="#1e5a9c" stroke-width="2" stroke-dasharray="4.5,3"/>
<line x1="1440" y1="998.71" x2="1917" y2="998.71" stroke="#1e5a9c" stroke-width="2" stroke-dasharray="4.5,3"/>
<line x1="1440" y1="979.22" x2="1917" y2="979.22" stroke="#1e5a9c" stroke-width="2" stroke-dasharray="4.5,3"/>
<line x1="1440" y1="959.73" x2="1917" y2="959.73" stroke="#1e5a9c" stroke-width="2" stroke-dasharray="4.5,3"/>
<line x1="1440" y1="940.24" x2="1917" y2="940.24" stroke="#1e5a9c" stroke-width="2" stroke-dasharray="4.5,3"/>
<line x1="1440" y1="920.75" x2="1917" y2="920.75" stroke="#1e5a9c" stroke-width="2" stroke-dasharray="4.5,3"/>
<line x1="1440" y1="901.26" x2="1917" y2="901.26" stroke="#1e5a9c" stroke-width="2" stroke-dasharray="4.5,3"/>
<line x1="1440" y1="881.77" x2="1917" y2="881.77" stroke="#1e5a9c" stroke-width="2" stroke-dasharray="4.5,3"/>
<line x1="1440" y1="862.28" x2="1917" y2="862.28" stroke="#1e5a9c" stroke-width="2" stroke-dasharray="4.5,3"/>
<line x1="1440" y1="842.79" x2="1917" y2="842.79" stroke="#1e5a9c" stroke-width="2" stroke-dasharray="4.5,3"/>
<line x1="1440" y1="823.3" x2="1917" y2="823.3" stroke="#1e5a9c" stroke-width="2" stroke-dasharray="4.5,3"/>
<line x1="1440" y1="803.81" x2="1917" y2="803.81" stroke="#1e5a9c" stroke-width="2" stroke-dasharray="4.5,3"/>
<text x="1449.4" y="1028.63" font-size="14" fill="#fff" text-anchor="middle" xml:space="preserve">0</text>
<text x="1449.4" y="1009.14" font-size="14" fill="#fff" text-anchor="middle" xml:space="preserve">1</text>
<text x="1449.4" y="989.65" font-size="14" fill="#fff" text-anchor="middle" xml:space="preserve">2</text>
<text x="1449.4" y="970.16" font-size="14" fill="#fff" text-anchor="middle" xml:space="preserve">3</text>
<text x="1449.4" y="950.67" font-size="14" fill="#fff" text-anchor="middle" xml:space="preserve">4</text>
<text x="1449.4" y="931.18" font-size="14" fill="#fff" text-anchor="middle" xml:space="preserve">5</text>
<text x="1449.4" y="911.69" font-size="14" fill="#fff" text-anchor="middle" xml:space="preserve">6</text>
<text x="1449.4" y="892.2" font-size="14" fill="#fff" text-anchor="middle" xml:space="preserve">7</text>
<text x="1449.4" y="872.71" font-size="14" fill="#fff" text-anchor="middle" xml:space="preserve">8</text>
<text x="1449.4" y="853.22" font-size="14" fill="#fff" text-anchor="middle" xml:space="preserve">9</text>
<text x="1444" y="833.73" font-size="14" fill="#fff" xml:space="preserve">10</text>
<text x="1444" y="814.24" font-size="14" fill="#fff" xml:space="preserve">11</text>
<text x="1681" y="801.26" font-size="17" fill="#fff" text-anchor="middle" textLength="230" lengthAdjust="spacingAndGlyphs" xml:space="preserve">Effective Layer STP (with CIN)</text>
<line x1="1440" y1="896.8" x2="1678" y2="896.8" stroke="#dc0000" stroke-width="2"/>
<rect x="1491" y="856.8" width="34.1" height="114.2" fill="none" stroke="#00ff00" stroke-width="2"/>
<line x1="1491" y1="917" x2="1525.1" y2="917" stroke="#00ff00" stroke-width="2"/>
<line x1="1507.8" y1="803.4" x2="1507.8" y2="856.8" stroke="#00ff00" stroke-width="2"/>
<line x1="1507.8" y1="971" x2="1507.8" y2="999.6" stroke="#00ff00" stroke-width="2"/>
<rect x="1558.75" y="932.8" width="34.45" height="70" fill="none" stroke="#00ff00" stroke-width="2"/>
<line x1="1558.75" y1="974.8" x2="1593.2" y2="974.8" stroke="#00ff00" stroke-width="2"/>
<line x1="1575.9" y1="854.2" x2="1575.9" y2="932.8" stroke="#00ff00" stroke-width="2"/>
<line x1="1575.9" y1="1002.8" x2="1575.9" y2="1019.5" stroke="#00ff00" stroke-width="2"/>
<rect x="1626.8" y="948.8" width="33.9" height="62.1" fill="none" stroke="#00ff00" stroke-width="2"/>
<line x1="1626.8" y1="988.8" x2="1660.7" y2="988.8" stroke="#00ff00" stroke-width="2"/>
<line x1="1643.9" y1="910.2" x2="1643.9" y2="948.8" stroke="#00ff00" stroke-width="2"/>
<line x1="1643.9" y1="1010.9" x2="1643.9" y2="1023.4" stroke="#00ff00" stroke-width="2"/>
<rect x="1696" y="971" width="33.9" height="46" fill="none" stroke="#00ff00" stroke-width="2"/>
<line x1="1696" y1="998.9" x2="1729.9" y2="998.9" stroke="#00ff00" stroke-width="2"/>
<line x1="1713" y1="932.3" x2="1713" y2="971" stroke="#00ff00" stroke-width="2"/>
<line x1="1713" y1="1017" x2="1713" y2="1023.9" stroke="#00ff00" stroke-width="2"/>
<rect x="1763.75" y="983" width="34.25" height="38" fill="none" stroke="#00ff00" stroke-width="2"/>
<line x1="1763.75" y1="1006.8" x2="1798" y2="1006.8" stroke="#00ff00" stroke-width="2"/>
<line x1="1781" y1="948.4" x2="1781" y2="983" stroke="#00ff00" stroke-width="2"/>
<line x1="1781" y1="1021" x2="1781" y2="1023.9" stroke="#00ff00" stroke-width="2"/>
<rect x="1831.8" y="1009" width="34.4" height="14" fill="none" stroke="#00ff00" stroke-width="2"/>
<line x1="1831.8" y1="1019.1" x2="1866.2" y2="1019.1" stroke="#00ff00" stroke-width="2"/>
<line x1="1848.9" y1="988.5" x2="1848.9" y2="1009" stroke="#00ff00" stroke-width="2"/>
<text x="1507.8" y="1039.8" font-size="11" fill="#fff" text-anchor="middle" xml:space="preserve">EF4+</text>
<text x="1575.9" y="1039.8" font-size="11" fill="#fff" text-anchor="middle" xml:space="preserve">EF3</text>
<text x="1643.9" y="1039.8" font-size="11" fill="#fff" text-anchor="middle" xml:space="preserve">EF2</text>
<text x="1713" y="1039.8" font-size="11" fill="#fff" text-anchor="middle" xml:space="preserve">EF1</text>
<text x="1781" y="1039.8" font-size="11" fill="#fff" text-anchor="middle" xml:space="preserve">EF0</text>
<text x="1848.9" y="1039.8" font-size="11" fill="#fff" text-anchor="middle" xml:space="preserve">NONTOR</text>
<rect x="1679" y="805" width="233.5" height="27.5" fill="#000" stroke="#fff" stroke-width="2"/>
<rect x="1679" y="832.5" width="233.5" height="75.5" fill="#000" stroke="#fff" stroke-width="2"/>
<text x="1682.4" y="817.74" font-size="12" fill="#fff" xml:space="preserve">Prob EF2+ torn with supercell</text>
<text x="1682.4" y="830.64" font-size="12" fill="#fff" xml:space="preserve">Sample CLIMO = .15 sigtor</text>
<text x="1683" y="843.74" font-size="12" fill="#fff" xml:space="preserve">based on CAPE:</text>
<text x="1879" y="843.74" font-size="12" fill="#fff" text-anchor="end" xml:space="preserve">0.14</text>
<text x="1683" y="855.74" font-size="12" fill="#ffff00" xml:space="preserve">based on LCL:</text>
<text x="1879" y="855.74" font-size="12" fill="#ffff00" text-anchor="end" xml:space="preserve">0.19</text>
<text x="1683" y="867.74" font-size="12" fill="#ffff00" xml:space="preserve">based on ESRH:</text>
<text x="1879" y="867.74" font-size="12" fill="#ffff00" text-anchor="end" xml:space="preserve">0.27</text>
<text x="1683" y="879.74" font-size="12" fill="#ffff00" xml:space="preserve">based on EBWD:</text>
<text x="1879" y="879.74" font-size="12" fill="#ffff00" text-anchor="end" xml:space="preserve">0.27</text>
<text x="1683" y="891.74" font-size="12" fill="#ff0000" xml:space="preserve">based on STPC:</text>
<text x="1879" y="891.74" font-size="12" fill="#ff0000" text-anchor="end" xml:space="preserve">0.34</text>
<text x="1683" y="903.74" font-size="12" fill="#ff0000" xml:space="preserve">based on STP_fixed:</text>
<text x="1879" y="903.74" font-size="12" fill="#ff0000" text-anchor="end" xml:space="preserve">0.39</text>
</g>
<rect x="0" y="1037" width="1920" height="3" fill="#000" stroke="none" stroke-width="1"/>
<line x1="1" y1="787.5" x2="1919" y2="787.5" stroke="#3aa0dc" stroke-width="3"/>
<line x1="2.5" y1="786" x2="2.5" y2="1039" stroke="#3aa0dc" stroke-width="3"/>
<line x1="1" y1="1038" x2="1919" y2="1038" stroke="#3aa0dc" stroke-width="2"/>
<line x1="1918" y1="786" x2="1918" y2="1039" stroke="#3aa0dc" stroke-width="2.2"/>
<line x1="482.3" y1="789" x2="482.3" y2="1037" stroke="#3aa0dc" stroke-width="1.2"/>
<line x1="960.5" y1="789" x2="960.5" y2="1037" stroke="#3aa0dc" stroke-width="1.2"/>
<line x1="1439.5" y1="789" x2="1439.5" y2="1037" stroke="#3aa0dc" stroke-width="1.2"/>
</svg>
</body></html>
